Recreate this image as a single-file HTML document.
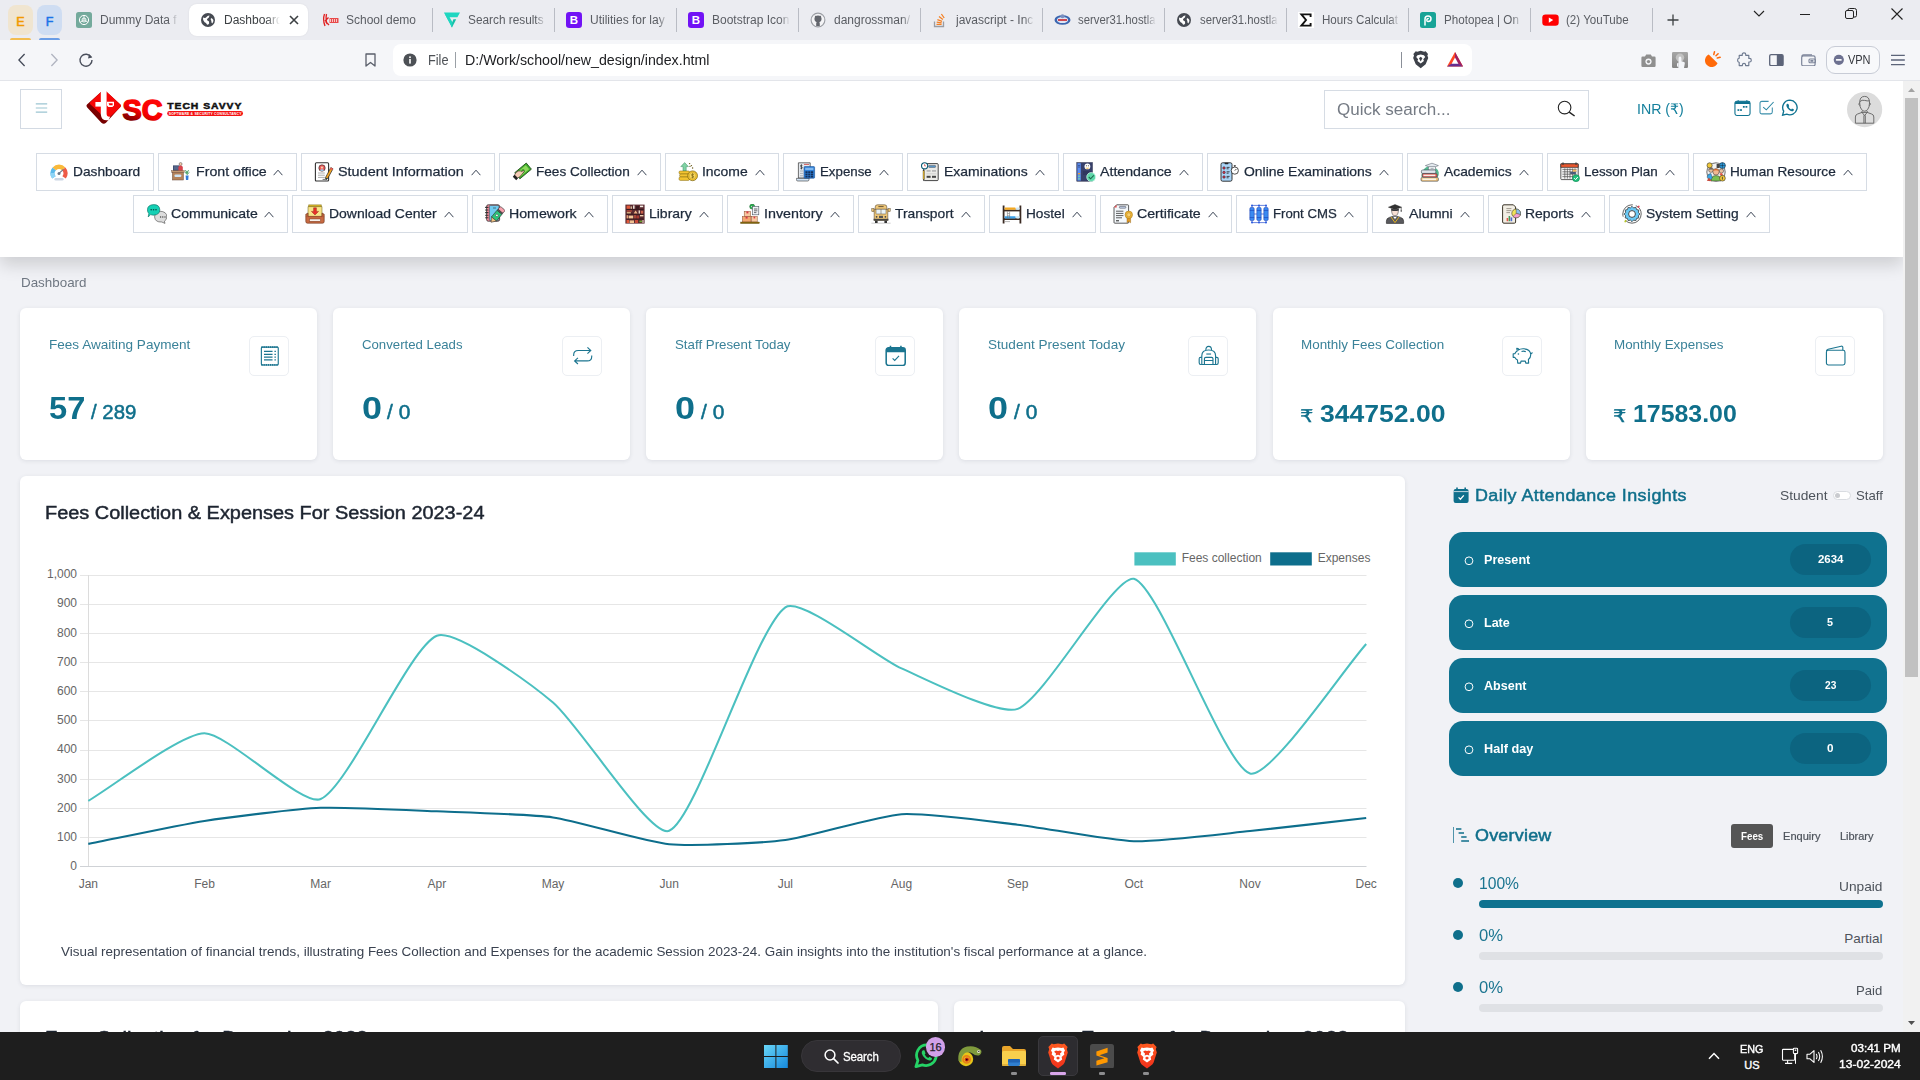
<!DOCTYPE html>
<html lang="en"><head><meta charset="utf-8"><title>Dashboard</title>
<style>
html,body{margin:0;padding:0;}
body{width:1920px;height:1080px;overflow:hidden;position:relative;background:#f1f2f6;font-family:"Liberation Sans",sans-serif;}
.t{position:absolute;white-space:nowrap;line-height:1;display:block;}
.b{position:absolute;display:block;}
#page{position:absolute;left:0;top:81px;width:1920px;height:951px;overflow:hidden;}
#page>.in{position:absolute;left:0;top:-81px;width:1920px;height:1080px;}
</style></head><body>
<div id="page"><div class="in">
<span class="t" style="left:20.75px;top:276px;font-size:13px;color:#6f7782;transform:scaleX(1.0299);transform-origin:0 50%;">Dashboard</span>
<div class="b" style="left:20px;top:308px;width:297px;height:152px;background:#fff;border-radius:6px;box-shadow:0 1px 4px rgba(40,50,70,.10);"></div>
<span class="t" style="left:48.75px;top:338px;font-size:13px;color:#3a8299;transform:scaleX(1.0419);transform-origin:0 50%;">Fees Awaiting Payment</span>
<div class="b" style="left:249px;top:336px;width:40px;height:40px;border:1px solid #eceff3;border-radius:5px;box-sizing:border-box;background:#fff;"></div>
<svg class="b" style="left:258.8px;top:344.8px;" width="21.4" height="21.4" viewBox="0 0 18 18"><rect x="2" y="1.8" width="14.2" height="15" rx="0.8" stroke="#1b7590" stroke-width="0.95" fill="none"/><path d="M4.2 5.4H11.4M4.2 7.8H11.4M4.2 10.2H11.4M4.2 12.6H11.4M13 5.4H14.2M13 7.8H14.2M13 10.2H14.2M13 12.6H14.2" stroke="#1b7590" stroke-width="1.05"/><path d="M2 1.8H16.2M2 16.8H16.2" stroke="#1b7590" stroke-width="1.5" stroke-dasharray="1.1 0.7"/></svg>
<div class="b" style="left:333.17px;top:308px;width:297px;height:152px;background:#fff;border-radius:6px;box-shadow:0 1px 4px rgba(40,50,70,.10);"></div>
<span class="t" style="left:361.92px;top:338px;font-size:13px;color:#3a8299;transform:scaleX(1.0150);transform-origin:0 50%;">Converted Leads</span>
<div class="b" style="left:562px;top:336px;width:40px;height:40px;border:1px solid #eceff3;border-radius:5px;box-sizing:border-box;background:#fff;"></div>
<svg class="b" style="left:571.8px;top:344.8px;" width="21.4" height="21.4" viewBox="0 0 18 18"><path d="M1.4 9.2V8.4Q1.4 4.6 5.2 4.6H15.6M13 2L15.8 4.6L13 7.2" stroke="#1b7590" stroke-width="0.95" fill="none"/><path d="M16.6 8.8V9.6Q16.6 13.4 12.8 13.4H2.4M5 10.8L2.2 13.4L5 16" stroke="#1b7590" stroke-width="0.95" fill="none"/></svg>
<div class="b" style="left:646.33px;top:308px;width:297px;height:152px;background:#fff;border-radius:6px;box-shadow:0 1px 4px rgba(40,50,70,.10);"></div>
<span class="t" style="left:675.08px;top:338px;font-size:13px;color:#3a8299;transform:scaleX(1.0223);transform-origin:0 50%;">Staff Present Today</span>
<div class="b" style="left:875px;top:336px;width:40px;height:40px;border:1px solid #eceff3;border-radius:5px;box-sizing:border-box;background:#fff;"></div>
<svg class="b" style="left:884.8px;top:344.8px;" width="21.4" height="21.4" viewBox="0 0 18 18"><rect x="1" y="2.4" width="16" height="14.8" rx="2" stroke="#1b7590" stroke-width="1.3" fill="none"/><path d="M1 4.4Q1 2.4 3 2.4H15Q17 2.4 17 4.4V6H1Z" fill="#1b7590"/><path d="M4.6 0.6V2.6M13.4 0.6V2.6" stroke="#1b7590" stroke-width="1.3"/><path d="M6.4 11.2L8.2 13L11.8 9.2" stroke="#1b7590" stroke-width="0.95" fill="none"/></svg>
<div class="b" style="left:959.3px;top:308px;width:297px;height:152px;background:#fff;border-radius:6px;box-shadow:0 1px 4px rgba(40,50,70,.10);"></div>
<span class="t" style="left:988.05px;top:338px;font-size:13px;color:#3a8299;transform:scaleX(1.0434);transform-origin:0 50%;">Student Present Today</span>
<div class="b" style="left:1188px;top:336px;width:40px;height:40px;border:1px solid #eceff3;border-radius:5px;box-sizing:border-box;background:#fff;"></div>
<svg class="b" style="left:1197.8px;top:344.8px;" width="21.4" height="21.4" viewBox="0 0 18 18"><path d="M3.2 16.4V9Q3.2 4.2 9 4.2Q14.8 4.2 14.8 9V16.4Z" stroke="#1b7590" stroke-width="0.95" fill="none"/><path d="M6.6 4.4Q6.6 1.2 9 1.2Q11.4 1.2 11.4 4.4" stroke="#1b7590" stroke-width="0.95" fill="none"/><path d="M5.4 16.4V11.6Q5.4 10.4 6.6 10.4H11.4Q12.6 10.4 12.6 11.6V16.4M5.4 13H12.6" stroke="#1b7590" stroke-width="0.95" fill="none"/><path d="M7 7.6H11" stroke="#1b7590" stroke-width="0.95" fill="none"/><path d="M3.2 10.4H2.2Q1 10.4 1 11.6V15Q1 16.4 2.2 16.4H3.2M14.8 10.4H15.8Q17 10.4 17 11.6V15Q17 16.4 15.8 16.4H14.8" stroke="#1b7590" stroke-width="0.95" fill="none"/></svg>
<div class="b" style="left:1272.67px;top:308px;width:297px;height:152px;background:#fff;border-radius:6px;box-shadow:0 1px 4px rgba(40,50,70,.10);"></div>
<span class="t" style="left:1301.42px;top:338px;font-size:13px;color:#3a8299;transform:scaleX(1.0329);transform-origin:0 50%;">Monthly Fees Collection</span>
<div class="b" style="left:1502px;top:336px;width:40px;height:40px;border:1px solid #eceff3;border-radius:5px;box-sizing:border-box;background:#fff;"></div>
<svg class="b" style="left:1511.8px;top:344.8px;" width="21.4" height="21.4" viewBox="0 0 18 18"><path d="M5 4.4Q7 3 10 3.2Q15.4 3.6 15.8 8Q15.8 10.6 13.8 12.2L14 15.2H11.6L11.2 13.6H7.6L7.2 15.2H4.8L4.6 12.6Q3 11.8 2.4 10.4H1V7.4H2.4Q3 5.8 4.4 5L4 2.8Q5.2 2.8 6 3.8" stroke="#1b7590" stroke-width="0.95" fill="none" stroke-linejoin="round"/><path d="M8 5.4Q10 4.8 11.6 5.6" stroke="#1b7590" stroke-width="0.95" fill="none"/><circle cx="5.4" cy="7.6" r="0.7" fill="#1b7590"/><path d="M15.8 7.4Q17 7.2 17 6" stroke="#1b7590" stroke-width="0.95" fill="none"/></svg>
<div class="b" style="left:1585.83px;top:308px;width:297px;height:152px;background:#fff;border-radius:6px;box-shadow:0 1px 4px rgba(40,50,70,.10);"></div>
<span class="t" style="left:1614.23px;top:338px;font-size:13px;color:#3a8299;transform:scaleX(1.0308);transform-origin:0 50%;">Monthly Expenses</span>
<div class="b" style="left:1815px;top:336px;width:40px;height:40px;border:1px solid #eceff3;border-radius:5px;box-sizing:border-box;background:#fff;"></div>
<svg class="b" style="left:1824.8px;top:344.8px;" width="21.4" height="21.4" viewBox="0 0 18 18"><path d="M1.2 5.2Q1.2 4 2.6 3.6L13.6 1Q15 0.8 15 2.2V4.4" stroke="#1b7590" stroke-width="0.95" fill="none"/><rect x="1.2" y="4.4" width="15.6" height="12.4" rx="1.6" stroke="#1b7590" stroke-width="0.95" fill="none"/></svg>
<span class="t" style="left:48.75px;top:392px;font-size:32px;color:#0f6f8b;transform:scaleX(1.0198);transform-origin:0 50%;font-weight:700;">57</span>
<span class="t" style="left:90.50px;top:402px;font-size:20px;color:#0f6f8b;transform:scaleX(1.0184);transform-origin:0 50%;-webkit-text-stroke:0.5px #0f6f8b;">/ 289</span>
<span class="t" style="left:361.97px;top:392px;font-size:32px;color:#0f6f8b;transform:scaleX(1.1238);transform-origin:0 50%;font-weight:700;">0</span>
<span class="t" style="left:387.47px;top:402px;font-size:20px;color:#0f6f8b;transform:scaleX(1.0479);transform-origin:0 50%;-webkit-text-stroke:0.5px #0f6f8b;">/ 0</span>
<span class="t" style="left:675.13px;top:392px;font-size:32px;color:#0f6f8b;transform:scaleX(1.1238);transform-origin:0 50%;font-weight:700;">0</span>
<span class="t" style="left:700.63px;top:402px;font-size:20px;color:#0f6f8b;transform:scaleX(1.0479);transform-origin:0 50%;-webkit-text-stroke:0.5px #0f6f8b;">/ 0</span>
<span class="t" style="left:988.10px;top:392px;font-size:32px;color:#0f6f8b;transform:scaleX(1.1238);transform-origin:0 50%;font-weight:700;">0</span>
<span class="t" style="left:1013.60px;top:402px;font-size:20px;color:#0f6f8b;transform:scaleX(1.0479);transform-origin:0 50%;-webkit-text-stroke:0.5px #0f6f8b;">/ 0</span>
<span class="t" style="left:1300.35px;top:408px;font-size:17.5px;font-family:'DejaVu Sans','Liberation Sans',sans-serif;color:#0f6f8b;-webkit-text-stroke:0.35px #0f6f8b;transform:scaleX(1.2);transform-origin:left;">₹</span>
<span class="t" style="left:1320.00px;top:402px;font-size:24px;color:#0f6f8b;transform:scaleX(1.1062);transform-origin:0 50%;font-weight:700;">344752.00</span>
<span class="t" style="left:1613.35px;top:408px;font-size:17.5px;font-family:'DejaVu Sans','Liberation Sans',sans-serif;color:#0f6f8b;-webkit-text-stroke:0.35px #0f6f8b;transform:scaleX(1.2);transform-origin:left;">₹</span>
<span class="t" style="left:1633.25px;top:402px;font-size:24px;color:#0f6f8b;transform:scaleX(1.0369);transform-origin:0 50%;font-weight:700;">17583.00</span>
<div class="b" style="left:20px;top:476px;width:1385px;height:509px;background:#fff;border-radius:6px;box-shadow:0 1px 4px rgba(40,50,70,.10);"></div>
<span class="t" style="left:44.50px;top:504px;font-size:18px;color:#1d2430;transform:scaleX(1.1064);transform-origin:0 50%;-webkit-text-stroke:0.45px #1d2430;">Fees Collection &amp; Expenses For Session 2023-24</span>
<svg class="b" style="left:0;top:0" width="1420" height="1000" viewBox="0 0 1420 1000"><path d="M80 866.5H1366.5" stroke="#cfd2d6" stroke-width="1"/><path d="M80 837.5H1366.5" stroke="#e6e6e6" stroke-width="1"/><path d="M80 808.5H1366.5" stroke="#e6e6e6" stroke-width="1"/><path d="M80 779.5H1366.5" stroke="#e6e6e6" stroke-width="1"/><path d="M80 750.5H1366.5" stroke="#e6e6e6" stroke-width="1"/><path d="M80 720.5H1366.5" stroke="#e6e6e6" stroke-width="1"/><path d="M80 691.5H1366.5" stroke="#e6e6e6" stroke-width="1"/><path d="M80 662.5H1366.5" stroke="#e6e6e6" stroke-width="1"/><path d="M80 633.5H1366.5" stroke="#e6e6e6" stroke-width="1"/><path d="M80 604.5H1366.5" stroke="#e6e6e6" stroke-width="1"/><path d="M80 575.5H1366.5" stroke="#e6e6e6" stroke-width="1"/><path d="M88.5 575V866" stroke="#dcdcdc" stroke-width="1"/><path d="M88.30 800.82C111.53 787.31 181.16 733.48 204.47 733.30C227.63 733.13 302.06 806.87 320.65 799.07C348.53 787.37 408.97 647.40 436.82 635.82C455.44 628.08 532.72 685.45 552.99 702.46C579.19 724.44 650.24 838.54 669.16 830.79C696.70 819.51 754.79 628.65 785.34 607.30C801.26 596.17 877.52 657.93 901.51 668.41C923.99 678.24 998.46 716.27 1017.68 708.86C1044.93 698.35 1113.65 575.00 1133.85 578.78C1160.12 586.09 1223.73 766.09 1250.03 773.46C1270.20 779.12 1342.97 669.87 1366.20 643.97" stroke="#4bc0c0" stroke-width="2.05" fill="none"/><path d="M88.30 843.88C111.53 839.29 181.09 824.53 204.47 820.89C227.56 817.31 297.34 808.76 320.65 807.80C343.81 806.84 413.59 810.33 436.82 811.29C460.06 812.25 530.04 814.15 552.99 817.40C576.51 820.73 645.64 841.88 669.16 844.17C692.10 846.42 762.38 843.06 785.34 840.10C808.85 837.07 878.04 815.76 901.51 814.20C924.51 812.68 994.52 821.98 1017.68 824.68C1040.99 827.39 1110.55 840.62 1133.85 841.26C1157.02 841.90 1226.82 833.41 1250.03 831.08C1273.29 828.75 1342.97 820.60 1366.20 817.99" stroke="#0d6e8c" stroke-width="2.05" fill="none"/><rect x="1134.4" y="552.3" width="41.4" height="13.2" fill="#4bc0c0"/><rect x="1270.2" y="552.3" width="41.6" height="13.2" fill="#0d6e8c"/></svg>
<span class="t" style="left:70.33px;top:860px;font-size:12px;color:#666;">0</span>
<span class="t" style="left:56.98px;top:831px;font-size:12px;color:#666;">100</span>
<span class="t" style="left:56.98px;top:802px;font-size:12px;color:#666;">200</span>
<span class="t" style="left:56.98px;top:773px;font-size:12px;color:#666;">300</span>
<span class="t" style="left:56.98px;top:743px;font-size:12px;color:#666;">400</span>
<span class="t" style="left:56.98px;top:714px;font-size:12px;color:#666;">500</span>
<span class="t" style="left:56.98px;top:685px;font-size:12px;color:#666;">600</span>
<span class="t" style="left:56.98px;top:656px;font-size:12px;color:#666;">700</span>
<span class="t" style="left:56.98px;top:627px;font-size:12px;color:#666;">800</span>
<span class="t" style="left:56.98px;top:597px;font-size:12px;color:#666;">900</span>
<span class="t" style="left:46.97px;top:568px;font-size:12px;color:#666;">1,000</span>
<span class="t" style="left:78.63px;top:878px;font-size:12px;color:#666;">Jan</span>
<span class="t" style="left:194.13px;top:878px;font-size:12px;color:#666;">Feb</span>
<span class="t" style="left:310.31px;top:878px;font-size:12px;color:#666;">Mar</span>
<span class="t" style="left:427.48px;top:878px;font-size:12px;color:#666;">Apr</span>
<span class="t" style="left:541.66px;top:878px;font-size:12px;color:#666;">May</span>
<span class="t" style="left:659.49px;top:878px;font-size:12px;color:#666;">Jun</span>
<span class="t" style="left:777.67px;top:878px;font-size:12px;color:#666;">Jul</span>
<span class="t" style="left:890.83px;top:878px;font-size:12px;color:#666;">Aug</span>
<span class="t" style="left:1007.01px;top:878px;font-size:12px;color:#666;">Sep</span>
<span class="t" style="left:1124.52px;top:878px;font-size:12px;color:#666;">Oct</span>
<span class="t" style="left:1239.36px;top:878px;font-size:12px;color:#666;">Nov</span>
<span class="t" style="left:1355.53px;top:878px;font-size:12px;color:#666;">Dec</span>
<span class="t" style="left:1181.70px;top:552px;font-size:12px;color:#666;">Fees collection</span>
<span class="t" style="left:1317.70px;top:552px;font-size:12px;color:#666;">Expenses</span>
<span class="t" style="left:60.50px;top:945px;font-size:13px;color:#3a4250;transform:scaleX(1.0342);transform-origin:0 50%;">Visual representation of financial trends, illustrating Fees Collection and Expenses for the academic Session 2023-24. Gain insights into the institution&#x27;s fiscal performance at a glance.</span>
<div class="b" style="left:20px;top:1001px;width:918px;height:60px;background:#fff;border-radius:6px;box-shadow:0 1px 4px rgba(40,50,70,.10);"></div>
<div class="b" style="left:954px;top:1001px;width:451px;height:60px;background:#fff;border-radius:6px;box-shadow:0 1px 4px rgba(40,50,70,.10);"></div>
<span class="t" style="left:44.50px;top:1029px;font-size:18px;color:#1d2430;letter-spacing:0.159px;transform:scaleX(1.1200);transform-origin:0 50%;-webkit-text-stroke:0.45px #1d2430;">Fees Collection for December 2023</span>
<span class="t" style="left:978.50px;top:1029px;font-size:18px;color:#1d2430;letter-spacing:0.405px;transform:scaleX(1.1200);transform-origin:0 50%;-webkit-text-stroke:0.45px #1d2430;">Income vs Expense for December 2023</span>
<svg class="b" style="left:1453px;top:487px;" width="17" height="17" viewBox="0 0 17 17"><path d="M0.6 4Q0.6 2 2.6 2H13.6Q15.6 2 15.6 4V14Q15.6 16 13.6 16H2.6Q0.6 16 0.6 14Z" fill="#0f6f8b"/><path d="M4 0.4V3M12.2 0.4V3" stroke="#0f6f8b" stroke-width="1.6"/><path d="M0.6 4.6H15.6" stroke="#f1f2f6" stroke-width="0.8"/><path d="M5.6 10.4L7.4 12.2L10.8 8.4" stroke="#fff" stroke-width="1.3" fill="none"/></svg>
<span class="t" style="left:1474.50px;top:488px;font-size:16px;color:#0f6f8b;letter-spacing:0.385px;transform:scaleX(1.1200);transform-origin:0 50%;-webkit-text-stroke:0.45px #0f6f8b;">Daily Attendance Insights</span>
<span class="t" style="left:1779.50px;top:489px;font-size:13px;color:#4d535b;transform:scaleX(1.0599);transform-origin:0 50%;">Student</span>
<div class="b" style="left:1832.5px;top:490.5px;width:18px;height:9.5px;border:1px solid #d9dce1;border-radius:5px;box-sizing:border-box;background:#fff;"></div>
<div class="b" style="left:1834.7px;top:492.6px;width:5.4px;height:5.4px;border-radius:50%;background:#c9cbcf;"></div>
<span class="t" style="left:1855.75px;top:489px;font-size:13px;color:#4d535b;transform:scaleX(1.0113);transform-origin:0 50%;">Staff</span>
<div class="b" style="left:1449px;top:532px;width:438px;height:54.75px;background:#0f728f;border-radius:14px;"></div>
<div class="b" style="left:1790px;top:544px;width:81.25px;height:31px;background:#0c6480;border-radius:15.5px;"></div>
<svg class="b" style="left:1463px;top:555px;" width="12" height="12" viewBox="0 0 12 12"><circle cx="6" cy="5.8" r="3.9" stroke="#fff" stroke-width="1" fill="none"/></svg>
<span class="t" style="left:1483.75px;top:553px;font-size:13px;color:#fff;transform:scaleX(0.9708);transform-origin:0 50%;font-weight:700;">Present</span>
<span class="t" style="left:1817.65px;top:554px;font-size:10.5px;color:#fff;transform:scaleX(1.0916);transform-origin:0 50%;font-weight:700;">2634</span>
<div class="b" style="left:1449px;top:595px;width:438px;height:54.75px;background:#0f728f;border-radius:14px;"></div>
<div class="b" style="left:1790px;top:607px;width:81.25px;height:31px;background:#0c6480;border-radius:15.5px;"></div>
<svg class="b" style="left:1463px;top:618px;" width="12" height="12" viewBox="0 0 12 12"><circle cx="6" cy="5.8" r="3.9" stroke="#fff" stroke-width="1" fill="none"/></svg>
<span class="t" style="left:1483.75px;top:616px;font-size:13px;color:#fff;transform:scaleX(0.9633);transform-origin:0 50%;font-weight:700;">Late</span>
<span class="t" style="left:1827.40px;top:617px;font-size:10.5px;color:#fff;transform:scaleX(1.0274);transform-origin:0 50%;font-weight:700;">5</span>
<div class="b" style="left:1449px;top:658px;width:438px;height:54.75px;background:#0f728f;border-radius:14px;"></div>
<div class="b" style="left:1790px;top:670px;width:81.25px;height:31px;background:#0c6480;border-radius:15.5px;"></div>
<svg class="b" style="left:1463px;top:681px;" width="12" height="12" viewBox="0 0 12 12"><circle cx="6" cy="5.8" r="3.9" stroke="#fff" stroke-width="1" fill="none"/></svg>
<span class="t" style="left:1483.75px;top:679px;font-size:13px;color:#fff;transform:scaleX(0.9646);transform-origin:0 50%;font-weight:700;">Absent</span>
<span class="t" style="left:1824.75px;top:680px;font-size:10.5px;color:#fff;transform:scaleX(0.9675);transform-origin:0 50%;font-weight:700;">23</span>
<div class="b" style="left:1449px;top:721px;width:438px;height:54.75px;background:#0f728f;border-radius:14px;"></div>
<div class="b" style="left:1790px;top:733px;width:81.25px;height:31px;background:#0c6480;border-radius:15.5px;"></div>
<svg class="b" style="left:1463px;top:744px;" width="12" height="12" viewBox="0 0 12 12"><circle cx="6" cy="5.8" r="3.9" stroke="#fff" stroke-width="1" fill="none"/></svg>
<span class="t" style="left:1483.75px;top:742px;font-size:13px;color:#fff;transform:scaleX(0.9738);transform-origin:0 50%;font-weight:700;">Half day</span>
<span class="t" style="left:1827.15px;top:743px;font-size:10.5px;color:#fff;transform:scaleX(1.1131);transform-origin:0 50%;font-weight:700;">0</span>
<svg class="b" style="left:1453px;top:827px;" width="17" height="17" viewBox="0 0 17 17"><path d="M0.4 0V16" stroke="#0f6f8b" stroke-width="0.8"/><path d="M3 2H8.4M5.6 6H11M8.2 10H13.6M8.2 14H16" stroke="#0f6f8b" stroke-width="1.7"/></svg>
<span class="t" style="left:1474.50px;top:828px;font-size:16px;color:#0f6f8b;letter-spacing:0.203px;transform:scaleX(1.1200);transform-origin:0 50%;-webkit-text-stroke:0.5px #0f6f8b;">Overview</span>
<div class="b" style="left:1731px;top:824px;width:42px;height:23.75px;background:#555;border-radius:3px;"></div>
<span class="t" style="left:1740.75px;top:831px;font-size:10.5px;color:#fff;transform:scaleX(0.9318);transform-origin:0 50%;font-weight:700;">Fees</span>
<span class="t" style="left:1782.50px;top:831px;font-size:10.5px;color:#4d535b;transform:scaleX(1.0533);transform-origin:0 50%;-webkit-text-stroke:0.2px #4d535b;">Enquiry</span>
<span class="t" style="left:1839.50px;top:831px;font-size:10.5px;color:#4d535b;transform:scaleX(1.0437);transform-origin:0 50%;-webkit-text-stroke:0.2px #4d535b;">Library</span>
<div class="b" style="left:1453px;top:878px;width:10px;height:10px;border-radius:50%;background:#0f6f8b;"></div>
<span class="t" style="left:1479.25px;top:876px;font-size:16px;color:#1b7590;transform:scaleX(0.9775);transform-origin:0 50%;">100%</span>
<span class="t" style="left:1839.00px;top:880px;font-size:13.5px;color:#4d535b;transform:scaleX(1.0168);transform-origin:0 50%;">Unpaid</span>
<div class="b" style="left:1479px;top:900px;width:404px;height:8px;border-radius:4px;background:#0f728f;"></div>
<div class="b" style="left:1453px;top:930px;width:10px;height:10px;border-radius:50%;background:#0f6f8b;"></div>
<span class="t" style="left:1479.25px;top:928px;font-size:16px;color:#1b7590;transform:scaleX(1.0378);transform-origin:0 50%;">0%</span>
<span class="t" style="left:1844.25px;top:932px;font-size:13.5px;color:#4d535b;">Partial</span>
<div class="b" style="left:1479px;top:952px;width:404px;height:8px;border-radius:4px;background:#dfe1e5;"></div>
<div class="b" style="left:1453px;top:982px;width:10px;height:10px;border-radius:50%;background:#0f6f8b;"></div>
<span class="t" style="left:1479.25px;top:980px;font-size:16px;color:#1b7590;transform:scaleX(1.0378);transform-origin:0 50%;">0%</span>
<span class="t" style="left:1856.25px;top:984px;font-size:13.5px;color:#4d535b;transform:scaleX(0.9715);transform-origin:0 50%;">Paid</span>
<div class="b" style="left:1479px;top:1004px;width:404px;height:8px;border-radius:4px;background:#dfe1e5;"></div>
<div class="b" style="left:0px;top:81px;width:1903px;height:176px;background:#fff;box-shadow:0 8px 16px rgba(0,0,0,.15);"></div>
<div class="b" style="left:20px;top:89px;width:42px;height:39.5px;border:1px solid #d3dae3;box-sizing:border-box;background:#fff;"></div>
<svg class="b" style="left:35px;top:102px;" width="13" height="12" viewBox="0 0 13 12"><path d="M0.8 1.8H12.2M0.8 6H12.2M0.8 10.2H12.2" stroke="#9cc5d2" stroke-width="1.2"/></svg>
<svg class="b" style="left:80px;top:84px;" width="170" height="50" viewBox="0 0 170 50"><defs><linearGradient id="lg2" x1="0.75" y1="0.1" x2="0.25" y2="0.95"><stop offset="0" stop-color="#ff0808"/><stop offset="0.55" stop-color="#f80000"/><stop offset="0.8" stop-color="#a80000"/><stop offset="1" stop-color="#6e0000"/></linearGradient>
<linearGradient id="lg3" x1="0.8" y1="0.2" x2="0.2" y2="0.9"><stop offset="0" stop-color="#b00000"/><stop offset="1" stop-color="#6a0000"/></linearGradient></defs>
<path d="M22.6 6.6Q23.9 5.4 25.2 6.6L40.4 20.6Q41.6 21.8 40.4 23L26 38.8Q23.8 40.8 21.4 38.8L7 23.2Q5.8 21.8 7 20.6Z" fill="url(#lg3)"/>
<path d="M22.6 6.6Q23.9 5.4 25.2 6.6L40.4 20.6Q41.6 21.8 40.4 23L29.4 33.6Q27 35.6 24.6 33.6L10 20Q9.4 19 10.4 18Z" fill="#f60606"/>
<path d="M20.8 5.4H26.6V29.4Q26.6 33.2 30.2 32.6L28.6 36.2Q21.4 37.4 20.8 30.2Z" fill="#fff"/>
<path d="M15.4 18H21.4V22.6H15.4Z" fill="#fff"/>
<path d="M27 17.8H34V21.4L32.4 23H28.4L27 21.4Z" fill="#fff"/>
<path d="M28.6 19.2H32.6V21.2H29.4Z" fill="#f60606"/>
<text x="42.6" y="35.6" font-family="Liberation Sans, sans-serif" font-weight="700" font-size="28.6" fill="url(#lg2)" stroke="url(#lg2)" stroke-width="1.5" stroke-linejoin="round" textLength="40" lengthAdjust="spacingAndGlyphs">SC</text>
<text x="87.2" y="24.9" font-family="Liberation Sans, sans-serif" font-weight="700" font-size="9.6" letter-spacing="0.9" fill="#111" stroke="#111" stroke-width="0.5" textLength="75.2" lengthAdjust="spacingAndGlyphs">TECH SAVVY</text>
<rect x="87.2" y="27" width="75.8" height="4.9" rx="2.45" fill="#f41212"/>
<text x="88.8" y="30.7" font-family="Liberation Sans, sans-serif" font-weight="700" font-size="3.4" fill="#fff" textLength="72.6" lengthAdjust="spacing">SOFTWARE &amp; SECURITY CONSULTANCY</text></svg>
<div class="b" style="left:1324px;top:89.5px;width:264.5px;height:39px;border:1px solid #d6dce4;box-sizing:border-box;background:#fff;"></div>
<span class="t" style="left:1336.50px;top:102px;font-size:16px;color:#757b84;transform:scaleX(1.0637);transform-origin:0 50%;">Quick search...</span>
<svg class="b" style="left:1557px;top:100px;" width="19" height="17" viewBox="0 0 19 17"><circle cx="7.6" cy="7.6" r="6.3" stroke="#222" stroke-width="1.1" fill="none"/><path d="M12.2 12.2L17.6 16" stroke="#222" stroke-width="1.5"/></svg>
<span class="t" style="left:1636.80px;top:102px;font-size:14.5px;color:#15809d;transform:scaleX(0.9771);transform-origin:0 50%;font-family:'Liberation Sans','DejaVu Sans',sans-serif;">INR (₹)</span>
<svg class="b" style="left:1733.9px;top:100px;" width="17" height="16.5" viewBox="0 0 17 16.5"><rect x="0.95" y="1.3" width="15.1" height="14.2" rx="1.9" stroke="#0f7391" stroke-width="1.1" fill="none"/><path d="M0.95 3.2Q0.95 1.3 2.85 1.3H14.15Q16.05 1.3 16.05 3.2V3.9H0.95Z" fill="#0f7391"/><path d="M4.2 0.3V1.6M12.8 0.3V1.6" stroke="#0f7391" stroke-width="1.2"/><rect x="8.9" y="6" width="1.8" height="1.7" fill="#0f7391"/><rect x="11.5" y="6" width="1.8" height="1.7" fill="#0f7391"/><rect x="3.5" y="9.2" width="1.8" height="1.7" fill="#0f7391"/><rect x="6.1" y="9.2" width="1.8" height="1.7" fill="#0f7391"/></svg>
<svg class="b" style="left:1758.9px;top:100.4px;" width="16" height="15.4" viewBox="0 0 16 15.4"><path d="M13.3 7.4V12Q13.3 13.9 11.4 13.9H2.9Q1 13.9 1 12V3.3Q1 1.4 2.9 1.4H9.6" stroke="#3b8fab" stroke-width="1.05" fill="none"/><path d="M4.2 7.2L7.3 9.9L14.6 2" stroke="#2a86a3" stroke-width="1.05" fill="none"/></svg>
<svg class="b" style="left:1781px;top:99.4px;" width="18" height="17" viewBox="0 0 18 17"><path d="M9 1.2A7.3 7.3 0 0 0 2.7 12.2L1.6 16.2L5.7 15.1A7.3 7.3 0 1 0 9 1.2Z" stroke="#0f7391" stroke-width="1.35" fill="none"/><path d="M6.2 4.8Q5.2 5.4 5.4 7Q6 9.4 8.2 11Q10.4 12.6 11.8 12.2Q13 11.8 13 10.6L11 9.6L10.2 10.4Q8.6 9.8 7.6 8L8.2 7.2L7.4 5Z" fill="#0f7391"/></svg>
<svg class="b" style="left:1846.7px;top:91.8px;" width="36" height="36" viewBox="0 0 36 36"><circle cx="17.6" cy="17.6" r="17.6" fill="#dcdcdc"/><path d="M8.4 31.2V25Q8.4 22.6 10.6 22L15 20.4H20.2L24.6 22Q26.8 22.6 26.8 25V31.2Z" stroke="#5a5a5a" stroke-width="0.85" fill="none"/><path d="M12.7 11Q12.5 4.4 17.6 4.4Q22.7 4.4 22.5 11Q22.5 15.4 20.6 17.6Q19 19.2 17.6 19.2Q16.2 19.2 14.6 17.6Q12.7 15.4 12.7 11Z" stroke="#5a5a5a" stroke-width="0.85" fill="none"/><path d="M12.8 9.6Q15 7.6 17.6 8.4Q20.4 9.2 22.4 8.8" stroke="#5a5a5a" stroke-width="0.85" fill="none"/><path d="M12.7 10.8Q11.6 11 12 12.6L12.8 13.6M22.5 10.8Q23.6 11 23.2 12.6L22.4 13.6" stroke="#5a5a5a" stroke-width="0.85" fill="none"/><path d="M15 20.4L17.6 23.6L20.2 20.4M16.9 23.4V31.2M18.3 23.4V31.2M15 19V20.4M20.2 19V20.4" stroke="#5a5a5a" stroke-width="0.85" fill="none"/></svg>
<div class="b" style="left:36px;top:153px;width:117.80000000000001px;height:37.5px;border:1px solid #d6dce4;box-sizing:border-box;background:#fff;"></div>
<svg class="b" style="left:49.2px;top:161.5px;" width="20" height="20" viewBox="0 0 20 20"><path d="M3.2 16.6A8.6 8.6 0 0 1 3.6 5.4L7 8.2A4.6 4.6 0 0 0 6.6 14.2Z" fill="#5bb9ea"/><path d="M3.2 16.6A8.6 8.6 0 0 1 1.4 11L5.4 11A4.6 4.6 0 0 0 6.6 14.2Z" fill="#8ed4f6"/>
<path d="M3.6 5.4A8.6 8.6 0 0 1 16.4 5.4L13 8.2A4.6 4.6 0 0 0 7 8.2Z" fill="#f9b93a"/><path d="M16.4 5.4A8.6 8.6 0 0 1 16.8 16.6L13.4 14.2A4.6 4.6 0 0 0 13 8.2Z" fill="#ee5a46"/>
<circle cx="10" cy="11.4" r="1.5" fill="#6b7686"/><path d="M10 11.4L14.4 7.4" stroke="#6b7686" stroke-width="1.1"/><rect x="5.4" y="16" width="9.2" height="2.6" rx="1.3" fill="#cbd6e4"/></svg>
<span class="t" style="left:73.40px;top:165px;font-size:13px;color:#1e2a3b;transform:scaleX(1.0550);transform-origin:0 50%;-webkit-text-stroke:0.25px #1e2a3b;">Dashboard</span>
<div class="b" style="left:158.2px;top:153px;width:138.5px;height:37.5px;border:1px solid #d6dce4;box-sizing:border-box;background:#fff;"></div>
<svg class="b" style="left:171.39999999999998px;top:161.5px;" width="20" height="20" viewBox="0 0 20 20"><rect x="2" y="3.4" width="6.6" height="5.6" fill="#3b4a6c"/><rect x="2.8" y="4.2" width="5" height="3.6" fill="#56668a"/>
<circle cx="9.6" cy="2" r="1.5" fill="#f0c9a8" stroke="#2b2b33" stroke-width="0.4"/><path d="M7.4 9V5.4Q7.4 3.6 9.6 3.6Q11.8 3.6 11.8 5.4V9Z" fill="#d8434b"/>
<rect x="0.6" y="8.6" width="12.6" height="1.6" fill="#c99b72" stroke="#6a4a3a" stroke-width="0.4"/><rect x="1.4" y="10.2" width="11" height="7.8" fill="#b5835a" stroke="#6a4a3a" stroke-width="0.5"/>
<rect x="3.4" y="12.6" width="7" height="2.4" rx="1.2" fill="#cfe3f3"/><path d="M16 12.4V8.8M16 12.4L13.8 10M16 12.4L18.4 10.4M16 11L14.4 8.2M16 11L17.6 8.2" stroke="#3c9a5a" stroke-width="0.9"/><path d="M14.6 13.4H17.6L17.2 18H15Z" fill="#2f7bd8"/></svg>
<span class="t" style="left:195.60px;top:165px;font-size:13px;color:#1e2a3b;transform:scaleX(1.0912);transform-origin:0 50%;-webkit-text-stroke:0.25px #1e2a3b;">Front office</span>
<svg class="b" style="left:272.7px;top:168.5px;" width="10" height="7" viewBox="0 0 10 7"><path d="M0.6 6.2L5 1.2L9.4 6.2" stroke="#3a4454" stroke-width="1" fill="none"/></svg>
<div class="b" style="left:301px;top:153px;width:193.5px;height:37.5px;border:1px solid #d6dce4;box-sizing:border-box;background:#fff;"></div>
<svg class="b" style="left:314.2px;top:161.5px;" width="20" height="20" viewBox="0 0 20 20"><path d="M2.4 0.8H13.6Q14.6 0.8 14.6 1.8V18Q14.6 19 13.6 19H2.4Q1.4 19 1.4 18V1.8Q1.4 0.8 2.4 0.8Z" fill="#fff" stroke="#333" stroke-width="1.1"/>
<circle cx="8" cy="6" r="3.2" fill="#ee5c5c" stroke="#222" stroke-width="0.6"/><circle cx="8" cy="5.6" r="1.1" fill="#f5d0b0"/><path d="M5.8 8.2Q8 6.4 10.2 8.2Q8 9.6 5.8 8.2Z" fill="#8fd0f5"/>
<path d="M4 11H10.8M4 13.2H10.8M4 15.4H10.8" stroke="#999" stroke-width="0.8"/><path d="M8.6 17.4H11" stroke="#333" stroke-width="0.7"/>
<path d="M16.8 5.6L19 6.8L13.6 16.6L11.8 17.8L11.6 15.4Z" fill="#f5a623" stroke="#222" stroke-width="0.7" stroke-linejoin="round"/><path d="M16.8 5.6L19 6.8L18.2 8.2L16 7Z" fill="#ee5c5c"/><path d="M11.6 15.4L13.6 16.6L11.8 17.8Z" fill="#1e3a4c"/></svg>
<span class="t" style="left:338.40px;top:165px;font-size:13px;color:#1e2a3b;transform:scaleX(1.1079);transform-origin:0 50%;-webkit-text-stroke:0.25px #1e2a3b;">Student Information</span>
<svg class="b" style="left:470.5px;top:168.5px;" width="10" height="7" viewBox="0 0 10 7"><path d="M0.6 6.2L5 1.2L9.4 6.2" stroke="#3a4454" stroke-width="1" fill="none"/></svg>
<div class="b" style="left:499px;top:153px;width:161.5px;height:37.5px;border:1px solid #d6dce4;box-sizing:border-box;background:#fff;"></div>
<svg class="b" style="left:512.2px;top:161.5px;" width="20" height="20" viewBox="0 0 20 20"><g transform="rotate(-40 11 9)"><rect x="3.6" y="5" width="15" height="8" fill="#3fae2a" stroke="#1f4a1a" stroke-width="0.8"/><rect x="5.4" y="6.4" width="11.4" height="5.2" fill="#8ed85c"/><circle cx="11" cy="9" r="1.8" fill="#3fae2a"/></g>
<path d="M2.4 13.4Q3.6 9.6 6.6 9Q8.4 8.6 9.8 9.6L11.4 8.4Q12.4 8.6 12 9.8L9.6 12.6Q8 15.4 5.4 16Z" fill="#f6cdb6" stroke="#3a2a24" stroke-width="0.6"/><path d="M0.8 14.8L2.6 12.8L6 16.2L4.2 18.2Z" fill="#222"/></svg>
<span class="t" style="left:536.40px;top:165px;font-size:13px;color:#1e2a3b;transform:scaleX(1.0458);transform-origin:0 50%;-webkit-text-stroke:0.25px #1e2a3b;">Fees Collection</span>
<svg class="b" style="left:636.5px;top:168.5px;" width="10" height="7" viewBox="0 0 10 7"><path d="M0.6 6.2L5 1.2L9.4 6.2" stroke="#3a4454" stroke-width="1" fill="none"/></svg>
<div class="b" style="left:665px;top:153px;width:113.5px;height:37.5px;border:1px solid #d6dce4;box-sizing:border-box;background:#fff;"></div>
<svg class="b" style="left:678.2px;top:161.5px;" width="20" height="20" viewBox="0 0 20 20"><path d="M5 9V4.6H2.8L6.6 0.6L10.4 4.6H8.2V9Z" fill="#7fd3a4" stroke="#3c8a62" stroke-width="0.5"/>
<circle cx="11.6" cy="1.6" r="0.7" fill="#6a5a1a"/><circle cx="13.4" cy="3.6" r="0.7" fill="#6a5a1a"/><circle cx="14.6" cy="6" r="0.7" fill="#6a5a1a"/><circle cx="12" cy="4.4" r="0.6" fill="#6a5a1a"/>
<rect x="1" y="9" width="10.6" height="3" rx="1.3" fill="#f3c431" stroke="#7a6412" stroke-width="0.5"/><rect x="1.6" y="12" width="10.6" height="3" rx="1.3" fill="#f3c431" stroke="#7a6412" stroke-width="0.5"/><rect x="1" y="15" width="10.6" height="3.4" rx="1.3" fill="#f3c431" stroke="#7a6412" stroke-width="0.5"/>
<circle cx="14.6" cy="13.8" r="4.9" fill="#f3c431" stroke="#7a6412" stroke-width="0.7"/><circle cx="14.6" cy="13.8" r="3.3" fill="#f8d860" stroke="#b8961c" stroke-width="0.4"/><path d="M15.8 12.6Q14.6 11.8 13.6 12.6Q13.2 13.6 14.6 13.8Q16 14.2 15.6 15.2Q14.6 16 13.4 15.2M14.6 11.2V16.4" stroke="#7a6412" stroke-width="0.7" fill="none"/></svg>
<span class="t" style="left:702.40px;top:165px;font-size:13px;color:#1e2a3b;transform:scaleX(1.0720);transform-origin:0 50%;-webkit-text-stroke:0.25px #1e2a3b;">Income</span>
<svg class="b" style="left:754.5px;top:168.5px;" width="10" height="7" viewBox="0 0 10 7"><path d="M0.6 6.2L5 1.2L9.4 6.2" stroke="#3a4454" stroke-width="1" fill="none"/></svg>
<div class="b" style="left:783px;top:153px;width:119.5px;height:37.5px;border:1px solid #d6dce4;box-sizing:border-box;background:#fff;"></div>
<svg class="b" style="left:796.2px;top:161.5px;" width="20" height="20" viewBox="0 0 20 20"><path d="M2.4 0.8H14.2V16H2.4Z" fill="#e5e9ee" stroke="#333" stroke-width="0.7"/><path d="M0.4 16.4H13V17.6Q13 19 11.6 19H1.8Q0.4 19 0.4 17.6Z" fill="#d2e4f5" stroke="#333" stroke-width="0.6"/>
<path d="M8 2.4H13" stroke="#d04a4a" stroke-width="0.9"/><path d="M4 9H7M4 11.4H7M4 13.8H7" stroke="#9aa3ad" stroke-width="0.8"/>
<path d="M6.4 3.6Q5.4 2.8 4.6 3.6Q4.4 4.6 5.4 4.8Q6.6 5.2 6.2 6.2Q5.4 6.8 4.4 6.2M5.4 2.4V7.4" stroke="#222" stroke-width="0.7" fill="none"/>
<rect x="8" y="4.6" width="10.6" height="11.6" rx="0.8" fill="#2f80d8" stroke="#1a4f92" stroke-width="0.6"/><rect x="9.2" y="5.8" width="8.2" height="2.2" fill="#7fb8f0"/>
<path d="M9.4 9.2H11.6V11H9.4ZM12.2 9.2H14.4V11H12.2ZM15 9.2H17.2V11H15ZM9.4 11.6H11.6V13.4H9.4ZM12.2 11.6H14.4V13.4H12.2ZM15 11.6H17.2V13.4H15ZM9.4 14H11.6V15.6H9.4ZM12.2 14H14.4V15.6H12.2ZM15 14H17.2V15.6H15Z" fill="#14305c"/></svg>
<span class="t" style="left:820.40px;top:165px;font-size:13px;color:#1e2a3b;transform:scaleX(1.0219);transform-origin:0 50%;-webkit-text-stroke:0.25px #1e2a3b;">Expense</span>
<svg class="b" style="left:878.5px;top:168.5px;" width="10" height="7" viewBox="0 0 10 7"><path d="M0.6 6.2L5 1.2L9.4 6.2" stroke="#3a4454" stroke-width="1" fill="none"/></svg>
<div class="b" style="left:907px;top:153px;width:151.5px;height:37.5px;border:1px solid #d6dce4;box-sizing:border-box;background:#fff;"></div>
<svg class="b" style="left:920.2px;top:161.5px;" width="20" height="20" viewBox="0 0 20 20"><rect x="3.6" y="1.6" width="14.6" height="17" rx="1" fill="#ecebe8" stroke="#333" stroke-width="0.9"/><rect x="8.6" y="3.4" width="7" height="2" rx="0.6" fill="#5a9ad0" stroke="#333" stroke-width="0.4"/>
<rect x="6.6" y="8" width="4" height="1.8" fill="#b9b9b9"/><rect x="12" y="8" width="4" height="1.8" fill="#b9b9b9"/><path d="M6.4 11.8H16.4" stroke="#ccc" stroke-width="0.8"/><rect x="6.6" y="13.8" width="4" height="2" fill="#444"/><rect x="12" y="13.8" width="4" height="2" fill="#444"/>
<circle cx="4.6" cy="3.8" r="3.1" fill="#fff" stroke="#0e5a72" stroke-width="1.1"/><path d="M4.6 2.2V3.9H5.9" stroke="#c33" stroke-width="0.7" fill="none"/><rect x="3" y="8.4" width="1.5" height="9" fill="#e9b82e" stroke="#333" stroke-width="0.35"/><path d="M3 17.4H4.5L3.75 19.2Z" fill="#333"/></svg>
<span class="t" style="left:944.40px;top:165px;font-size:13px;color:#1e2a3b;transform:scaleX(1.0725);transform-origin:0 50%;-webkit-text-stroke:0.25px #1e2a3b;">Examinations</span>
<svg class="b" style="left:1034.5px;top:168.5px;" width="10" height="7" viewBox="0 0 10 7"><path d="M0.6 6.2L5 1.2L9.4 6.2" stroke="#3a4454" stroke-width="1" fill="none"/></svg>
<div class="b" style="left:1063px;top:153px;width:139.5px;height:37.5px;border:1px solid #d6dce4;box-sizing:border-box;background:#fff;"></div>
<svg class="b" style="left:1076.2px;top:161.5px;" width="20" height="20" viewBox="0 0 20 20"><rect x="0.8" y="0.6" width="15.6" height="18.6" fill="#37406a" stroke="#1b2140" stroke-width="0.5"/><rect x="1.4" y="1.2" width="3.4" height="17.4" fill="#5b8df0"/>
<path d="M2 3.4H4.2M2 5H4.2" stroke="#23305a" stroke-width="0.6"/><rect x="2" y="11" width="2.2" height="1.3" fill="#f0a030"/><rect x="2" y="13.6" width="2.2" height="1.3" fill="#6fd0b0"/><rect x="2" y="16.2" width="2.2" height="1.3" fill="#6fd0b0"/>
<circle cx="11.4" cy="4.4" r="2.9" fill="#fff"/><circle cx="10.4" cy="3.8" r="0.5" fill="#222"/><circle cx="12.4" cy="3.8" r="0.5" fill="#222"/><path d="M9.4 5.8Q11.4 7.8 13.4 5.8Z" fill="#f0b030"/><path d="M7 10H15M7 12H13" stroke="#252c52" stroke-width="0.8"/>
<circle cx="15.2" cy="15" r="4.5" fill="#5fd8aa" stroke="#eafff6" stroke-width="0.6"/><path d="M12.8 15L14.6 16.8L17.8 13.4" stroke="#1f6a4c" stroke-width="1.1" fill="none"/></svg>
<span class="t" style="left:1100.40px;top:165px;font-size:13px;color:#1e2a3b;transform:scaleX(1.0901);transform-origin:0 50%;-webkit-text-stroke:0.25px #1e2a3b;">Attendance</span>
<svg class="b" style="left:1178.5px;top:168.5px;" width="10" height="7" viewBox="0 0 10 7"><path d="M0.6 6.2L5 1.2L9.4 6.2" stroke="#3a4454" stroke-width="1" fill="none"/></svg>
<div class="b" style="left:1207px;top:153px;width:195.5px;height:37.5px;border:1px solid #d6dce4;box-sizing:border-box;background:#fff;"></div>
<svg class="b" style="left:1220.2px;top:161.5px;" width="20" height="20" viewBox="0 0 20 20"><rect x="1" y="0.8" width="11" height="18.4" rx="1.6" fill="#a9d4f7" stroke="#222" stroke-width="0.9"/><path d="M4.6 0.8H8.4V1.6Q8.4 2.2 7.8 2.2H5.2Q4.6 2.2 4.6 1.6Z" fill="#222"/>
<circle cx="4" cy="6" r="1.3" fill="#c8324a" stroke="#222" stroke-width="0.4"/><circle cx="4" cy="10.4" r="1.3" fill="#c8324a" stroke="#222" stroke-width="0.4"/><circle cx="4" cy="15" r="1.3" fill="#c8324a" stroke="#222" stroke-width="0.4"/>
<path d="M6.6 5.4H9.6M6.6 6.8H8.6M6.6 9.8H9.6M6.6 11.2H8.6M6.6 14.4H9.6M6.6 15.8H8.6" stroke="#222" stroke-width="0.8"/>
<circle cx="14.8" cy="8.6" r="3.6" fill="#fff" stroke="#222" stroke-width="0.8"/><path d="M14.8 5V3.8M13.8 3.6H15.8M14.8 8.6L16.4 7" stroke="#222" stroke-width="0.8"/></svg>
<span class="t" style="left:1244.40px;top:165px;font-size:13px;color:#1e2a3b;transform:scaleX(1.0710);transform-origin:0 50%;-webkit-text-stroke:0.25px #1e2a3b;">Online Examinations</span>
<svg class="b" style="left:1378.5px;top:168.5px;" width="10" height="7" viewBox="0 0 10 7"><path d="M0.6 6.2L5 1.2L9.4 6.2" stroke="#3a4454" stroke-width="1" fill="none"/></svg>
<div class="b" style="left:1407px;top:153px;width:135.5px;height:37.5px;border:1px solid #d6dce4;box-sizing:border-box;background:#fff;"></div>
<svg class="b" style="left:1420.2px;top:161.5px;" width="20" height="20" viewBox="0 0 20 20"><path d="M1.6 13A8.8 8.8 0 0 1 18.8 10.4Q19 13 17.8 15H1.6Z" fill="#56b890"/>
<path d="M5.4 3.6L12 1.2L18.4 3.6L12 6Z" fill="#e4e9ee" stroke="#4a5560" stroke-width="0.5"/><rect x="8.4" y="4.6" width="7.2" height="3.4" rx="1.2" fill="#f4f6f8" stroke="#4a5560" stroke-width="0.5"/><path d="M10.6 6.4H13.6" stroke="#8a949e" stroke-width="0.7"/>
<rect x="1.4" y="8" width="14.4" height="3.4" rx="1.2" fill="#dfe6ec" stroke="#3a4450" stroke-width="0.6"/><rect x="2.2" y="11.6" width="15" height="3.6" rx="1.2" fill="#e4574f" stroke="#3a4450" stroke-width="0.6"/><rect x="3.4" y="12.6" width="12" height="1.6" fill="#f9ece6"/>
<rect x="1" y="15.4" width="17.4" height="3.8" rx="1.2" fill="#efc27a" stroke="#3a4450" stroke-width="0.6"/><rect x="2.4" y="16.5" width="13.6" height="1.6" fill="#faf3e6"/></svg>
<span class="t" style="left:1444.40px;top:165px;font-size:13px;color:#1e2a3b;transform:scaleX(1.0648);transform-origin:0 50%;-webkit-text-stroke:0.25px #1e2a3b;">Academics</span>
<svg class="b" style="left:1518.5px;top:168.5px;" width="10" height="7" viewBox="0 0 10 7"><path d="M0.6 6.2L5 1.2L9.4 6.2" stroke="#3a4454" stroke-width="1" fill="none"/></svg>
<div class="b" style="left:1547px;top:153px;width:141.5px;height:37.5px;border:1px solid #d6dce4;box-sizing:border-box;background:#fff;"></div>
<svg class="b" style="left:1560.2px;top:161.5px;" width="20" height="20" viewBox="0 0 20 20"><rect x="0.8" y="1.8" width="17.4" height="15.8" rx="0.8" fill="#f4f4f4" stroke="#333" stroke-width="0.8"/><path d="M0.8 1.8H18.2V5.4H0.8Z" fill="#e8572e" stroke="#333" stroke-width="0.7"/><path d="M3 0.4V3M16 0.4V3" stroke="#333" stroke-width="1"/>
<path d="M2.4 7.4H16.6M2.4 9.8H16.6M2.4 12.2H16.6M2.4 14.6H16.6M4.8 6.4V16.6M7.4 6.4V16.6M10 6.4V16.6M12.6 6.4V16.6M15 6.4V16.6" stroke="#555" stroke-width="0.7"/>
<rect x="12.8" y="7.6" width="3.6" height="2" fill="#f4b860"/><rect x="10.2" y="10" width="5.6" height="2" fill="#4a5a7a"/>
<circle cx="16" cy="16.2" r="3.5" fill="#1fc07a" stroke="#0a7a4a" stroke-width="0.5"/><path d="M14.2 16.2L15.6 17.6L17.8 15" stroke="#fff" stroke-width="1" fill="none"/></svg>
<span class="t" style="left:1584.40px;top:165px;font-size:13px;color:#1e2a3b;transform:scaleX(1.0300);transform-origin:0 50%;-webkit-text-stroke:0.25px #1e2a3b;">Lesson Plan</span>
<svg class="b" style="left:1664.5px;top:168.5px;" width="10" height="7" viewBox="0 0 10 7"><path d="M0.6 6.2L5 1.2L9.4 6.2" stroke="#3a4454" stroke-width="1" fill="none"/></svg>
<div class="b" style="left:1693px;top:153px;width:173.5px;height:37.5px;border:1px solid #d6dce4;box-sizing:border-box;background:#fff;"></div>
<svg class="b" style="left:1706.2px;top:161.5px;" width="20" height="20" viewBox="0 0 20 20"><circle cx="10" cy="10" r="9.2" fill="#f2f2f2" stroke="#333" stroke-width="0.7"/>
<circle cx="3.6" cy="3.4" r="2.6" fill="#f0c838" stroke="#333" stroke-width="0.6"/><circle cx="16.4" cy="3.6" r="3" fill="#2f9fe0" stroke="#123" stroke-width="0.6"/><path d="M13.6 3.6H19.2M16.4 0.8V6.4" stroke="#123" stroke-width="0.5"/>
<rect x="10.6" y="2" width="3" height="4" fill="#444"/>
<circle cx="5" cy="8" r="2.4" fill="#e8c0a0" stroke="#333" stroke-width="0.5"/><path d="M2.6 7.4Q5 4.4 7.4 7.4" fill="#555"/><circle cx="15.4" cy="9" r="2.2" fill="#e8c0a0" stroke="#333" stroke-width="0.5"/>
<circle cx="10" cy="9.8" r="3.2" fill="#f0b890" stroke="#333" stroke-width="0.5"/><path d="M6.8 9Q10 4.4 13.2 9Q10 7.4 6.8 9Z" fill="#d86a28"/>
<path d="M5 19Q5 13.6 10 13.6Q15 13.6 15 19Z" fill="#7ac050" stroke="#333" stroke-width="0.5"/><path d="M1 15Q2 11.4 5 11.6L6.4 16L3.4 18.8Z" fill="#38a8e8" stroke="#333" stroke-width="0.4"/><path d="M0.8 18.8L3 15.4L5.4 19.2Z" fill="#c84838"/>
<path d="M13.4 12L15.4 10.8L17.4 13.2L15.6 14.6Z" fill="#e85848"/><circle cx="16.4" cy="16.2" r="2.9" fill="#f0c838" stroke="#333" stroke-width="0.6"/><path d="M16.4 14.8V17.6" stroke="#333" stroke-width="0.8"/></svg>
<span class="t" style="left:1730.40px;top:165px;font-size:13px;color:#1e2a3b;transform:scaleX(1.0449);transform-origin:0 50%;-webkit-text-stroke:0.25px #1e2a3b;">Human Resource</span>
<svg class="b" style="left:1842.5px;top:168.5px;" width="10" height="7" viewBox="0 0 10 7"><path d="M0.6 6.2L5 1.2L9.4 6.2" stroke="#3a4454" stroke-width="1" fill="none"/></svg>
<div class="b" style="left:133.3px;top:195px;width:154.5px;height:37.5px;border:1px solid #d6dce4;box-sizing:border-box;background:#fff;"></div>
<svg class="b" style="left:146.5px;top:203.5px;" width="20" height="20" viewBox="0 0 20 20"><path d="M12.6 7.2Q20 7.4 19.8 13Q19.6 16 17.4 17.2L18 19.4L14.8 18Q8 18.4 7.6 13Q7.6 9 12.6 7.2Z" fill="#dcdcdc" stroke="#444" stroke-width="0.6"/>
<circle cx="13.6" cy="13" r="0.7" fill="#444"/><circle cx="15.8" cy="13" r="0.7" fill="#444"/><circle cx="18" cy="13" r="0.7" fill="#444"/>
<path d="M6.6 0.6Q12.6 0.6 12.8 5.8Q12.8 10.6 6.8 11.2Q5 11.2 3.6 10.6L1.2 13L1.8 9.6Q0.4 8 0.4 5.8Q0.6 0.8 6.6 0.6Z" fill="#14d0b4" stroke="#0a6a5e" stroke-width="0.6"/>
<circle cx="4.2" cy="5.8" r="0.8" fill="#0a4a42"/><circle cx="6.6" cy="5.8" r="0.8" fill="#0a4a42"/><circle cx="9" cy="5.8" r="0.8" fill="#0a4a42"/></svg>
<span class="t" style="left:170.70px;top:207px;font-size:13px;color:#1e2a3b;transform:scaleX(1.0811);transform-origin:0 50%;-webkit-text-stroke:0.25px #1e2a3b;">Communicate</span>
<svg class="b" style="left:263.8px;top:210.5px;" width="10" height="7" viewBox="0 0 10 7"><path d="M0.6 6.2L5 1.2L9.4 6.2" stroke="#3a4454" stroke-width="1" fill="none"/></svg>
<div class="b" style="left:292px;top:195px;width:175.5px;height:37.5px;border:1px solid #d6dce4;box-sizing:border-box;background:#fff;"></div>
<svg class="b" style="left:305.2px;top:203.5px;" width="20" height="20" viewBox="0 0 20 20"><path d="M3.6 0.8H16.4V3H3.6Z" fill="#d8b82a" stroke="#6a5a10" stroke-width="0.4"/><path d="M3 2.6H17V13H3Z" fill="#f8e48a" stroke="#6a5a10" stroke-width="0.5"/>
<path d="M8.6 3.8H11.4V7.4H13.6L10 11L6.4 7.4H8.6Z" fill="#e8302a" stroke="#8a1410" stroke-width="0.4"/>
<path d="M0.8 10.2L3 9V12.4H17V9L19.2 10.2V17.6Q19.2 19.2 17.6 19.2H2.4Q0.8 19.2 0.8 17.6Z" fill="#c86a42" stroke="#6a3018" stroke-width="0.6"/><path d="M0.8 12.6H19.2" stroke="#a85030" stroke-width="0.6"/><rect x="4.6" y="15" width="10.8" height="2.2" fill="#f6f0ea" stroke="#6a3018" stroke-width="0.4"/></svg>
<span class="t" style="left:329.40px;top:207px;font-size:13px;color:#1e2a3b;transform:scaleX(1.0722);transform-origin:0 50%;-webkit-text-stroke:0.25px #1e2a3b;">Download Center</span>
<svg class="b" style="left:443.5px;top:210.5px;" width="10" height="7" viewBox="0 0 10 7"><path d="M0.6 6.2L5 1.2L9.4 6.2" stroke="#3a4454" stroke-width="1" fill="none"/></svg>
<div class="b" style="left:472px;top:195px;width:135.5px;height:37.5px;border:1px solid #d6dce4;box-sizing:border-box;background:#fff;"></div>
<svg class="b" style="left:485.2px;top:203.5px;" width="20" height="20" viewBox="0 0 20 20"><rect x="1.6" y="0.8" width="13" height="16.4" rx="1.6" fill="#f48a9a" stroke="#333" stroke-width="0.8"/><rect x="4.4" y="1.4" width="9.6" height="15.2" rx="1" fill="#6ecbf0" stroke="#333" stroke-width="0.5"/>
<path d="M0.6 3.4H3M0.6 6H3M0.6 8.6H3M0.6 11.2H3M0.6 13.8H3" stroke="#333" stroke-width="1.1" stroke-linecap="round"/><path d="M8 4H11" stroke="#333" stroke-width="0.6"/>
<g transform="rotate(40 12 11)"><rect x="9" y="2.2" width="6.4" height="4" rx="1.4" fill="#f7a0ac" stroke="#333" stroke-width="0.6"/><rect x="9" y="5.8" width="6.4" height="1.6" fill="#555" stroke="#333" stroke-width="0.4"/><rect x="9" y="7.4" width="6.4" height="8.6" fill="#2cc47a" stroke="#333" stroke-width="0.6"/><rect x="11.2" y="10.4" width="2" height="2" fill="#fff" stroke="#333" stroke-width="0.4"/><path d="M9 16H15.4L12.2 20.4Z" fill="#f0c080" stroke="#333" stroke-width="0.5"/></g></svg>
<span class="t" style="left:509.40px;top:207px;font-size:13px;color:#1e2a3b;transform:scaleX(1.0897);transform-origin:0 50%;-webkit-text-stroke:0.25px #1e2a3b;">Homework</span>
<svg class="b" style="left:583.5px;top:210.5px;" width="10" height="7" viewBox="0 0 10 7"><path d="M0.6 6.2L5 1.2L9.4 6.2" stroke="#3a4454" stroke-width="1" fill="none"/></svg>
<div class="b" style="left:612px;top:195px;width:110.5px;height:37.5px;border:1px solid #d6dce4;box-sizing:border-box;background:#fff;"></div>
<svg class="b" style="left:625.2px;top:203.5px;" width="20" height="20" viewBox="0 0 20 20"><rect x="0.4" y="0.6" width="19.2" height="19" fill="#5a2a30"/>
<path d="M1.4 5.4H18.6M1.4 10.2H18.6M1.4 15H18.6" stroke="#2a1216" stroke-width="0.8"/>
<rect x="1.6" y="1.6" width="3.4" height="3.2" fill="#e05a3a"/><rect x="5.6" y="2.4" width="1.2" height="2.4" fill="#f0d8b0"/><rect x="8" y="1.4" width="1.6" height="3.4" fill="#e8e0d8"/><rect x="11" y="2" width="3" height="2.8" fill="#3a1a20"/><rect x="15" y="1.6" width="3.2" height="1.6" fill="#f4ece4"/>
<rect x="1.8" y="6.4" width="5" height="1.2" fill="#c8503a"/><rect x="1.8" y="8.2" width="4" height="1.2" fill="#f0c890"/><path d="M8.6 9.6L10.6 6.4L12.6 9.6Z" fill="#f0b888"/><rect x="13.6" y="6.4" width="1.4" height="3.2" fill="#e8d8c8"/><rect x="15.8" y="6.8" width="2.4" height="2.8" fill="#c8604a"/>
<rect x="1.6" y="11.2" width="1.4" height="3.2" fill="#e8a078"/><rect x="3.6" y="11.6" width="4.6" height="2.8" fill="#f4c898"/><rect x="9.4" y="11" width="1.2" height="3.4" fill="#d85a40"/><rect x="11.4" y="11.6" width="2.6" height="2.8" fill="#a83a30"/><rect x="15" y="11" width="3.4" height="1.4" fill="#f0d0b0"/>
<rect x="1.6" y="16" width="2.4" height="3" fill="#e0583a"/><rect x="4.6" y="16.4" width="4.4" height="2.6" fill="#f0c090"/><rect x="10" y="16" width="3" height="3" fill="#c84a38"/><rect x="14.4" y="16.6" width="2.6" height="1.6" fill="#6aa830"/><rect x="17.4" y="16" width="1.2" height="3" fill="#e8d0c0"/></svg>
<span class="t" style="left:649.40px;top:207px;font-size:13px;color:#1e2a3b;transform:scaleX(1.0745);transform-origin:0 50%;-webkit-text-stroke:0.25px #1e2a3b;">Library</span>
<svg class="b" style="left:698.5px;top:210.5px;" width="10" height="7" viewBox="0 0 10 7"><path d="M0.6 6.2L5 1.2L9.4 6.2" stroke="#3a4454" stroke-width="1" fill="none"/></svg>
<div class="b" style="left:727px;top:195px;width:126.5px;height:37.5px;border:1px solid #d6dce4;box-sizing:border-box;background:#fff;"></div>
<svg class="b" style="left:740.2px;top:203.5px;" width="20" height="20" viewBox="0 0 20 20"><circle cx="12.2" cy="2.6" r="2.5" fill="#2cb050" stroke="#145a28" stroke-width="0.5"/><path d="M11 2.6H13.4" stroke="#fff" stroke-width="0.7"/>
<rect x="12.4" y="2.4" width="6.4" height="8.4" fill="#f0f2f6" stroke="#4a5560" stroke-width="0.6"/><path d="M14 5H17.4M14 6.8H17.4M14 8.6H16.4" stroke="#333" stroke-width="0.7"/>
<rect x="4.2" y="7.4" width="6.4" height="5.2" fill="#f8c8a0" stroke="#8a4a2a" stroke-width="0.5"/><rect x="6.4" y="7.4" width="2" height="2" fill="#d83a4a"/>
<rect x="2.4" y="12.6" width="8.6" height="5.4" fill="#f4a870" stroke="#8a4a2a" stroke-width="0.5"/><rect x="5.6" y="12.6" width="2" height="2" fill="#d83a4a"/>
<rect x="11.6" y="12.6" width="5.6" height="5.4" fill="#f8c8a0" stroke="#8a4a2a" stroke-width="0.5"/><rect x="13.6" y="12.6" width="1.6" height="1.8" fill="#d83a4a"/>
<rect x="0.6" y="18" width="18.8" height="1.6" fill="#8a6a10" stroke="#4a3a08" stroke-width="0.3"/></svg>
<span class="t" style="left:764.40px;top:207px;font-size:13px;color:#1e2a3b;transform:scaleX(1.0977);transform-origin:0 50%;-webkit-text-stroke:0.25px #1e2a3b;">Inventory</span>
<svg class="b" style="left:829.5px;top:210.5px;" width="10" height="7" viewBox="0 0 10 7"><path d="M0.6 6.2L5 1.2L9.4 6.2" stroke="#3a4454" stroke-width="1" fill="none"/></svg>
<div class="b" style="left:858px;top:195px;width:126.5px;height:37.5px;border:1px solid #d6dce4;box-sizing:border-box;background:#fff;"></div>
<svg class="b" style="left:871.2px;top:203.5px;" width="20" height="20" viewBox="0 0 20 20"><path d="M0.4 19.2H19.6" stroke="#999" stroke-width="0.5"/>
<path d="M4.2 3Q4.2 0.8 6.4 0.8H13.6Q15.8 0.8 15.8 3V5.6H4.2Z" fill="#f0c878" stroke="#5a4a30" stroke-width="0.6"/><path d="M7.4 2.6H12.6" stroke="#5a4a30" stroke-width="0.9"/>
<rect x="0.8" y="4.6" width="2.2" height="3" fill="#f0c878" stroke="#5a4a30" stroke-width="0.5"/><rect x="17" y="4.6" width="2.2" height="3" fill="#f0c878" stroke="#5a4a30" stroke-width="0.5"/>
<path d="M3.2 5.4H16.8V16.4H3.2Z" fill="#f0c878" stroke="#5a4a30" stroke-width="0.6"/><rect x="5" y="5.2" width="10" height="4.8" rx="0.6" fill="#eaf4f8" stroke="#5a4a30" stroke-width="0.5"/><path d="M10 5.2V10" stroke="#5a4a30" stroke-width="0.5"/>
<circle cx="5.6" cy="12.8" r="0.9" fill="#444"/><circle cx="14.4" cy="12.8" r="0.9" fill="#444"/><rect x="8" y="11.8" width="4" height="2.2" fill="#555"/><rect x="2.6" y="14.8" width="14.8" height="1.8" fill="#444"/>
<rect x="4" y="16.6" width="2.6" height="2.4" fill="#333"/><rect x="13.4" y="16.6" width="2.6" height="2.4" fill="#333"/></svg>
<span class="t" style="left:895.40px;top:207px;font-size:13px;color:#1e2a3b;transform:scaleX(1.0644);transform-origin:0 50%;-webkit-text-stroke:0.25px #1e2a3b;">Transport</span>
<svg class="b" style="left:960.5px;top:210.5px;" width="10" height="7" viewBox="0 0 10 7"><path d="M0.6 6.2L5 1.2L9.4 6.2" stroke="#3a4454" stroke-width="1" fill="none"/></svg>
<div class="b" style="left:989px;top:195px;width:106.5px;height:37.5px;border:1px solid #d6dce4;box-sizing:border-box;background:#fff;"></div>
<svg class="b" style="left:1002.2px;top:203.5px;" width="20" height="20" viewBox="0 0 20 20"><path d="M1.6 1.6V19.4M18.4 1.6V19.4" stroke="#3a2a22" stroke-width="1.8"/>
<rect x="1.6" y="5.6" width="16.8" height="1.8" fill="#3a2a22"/><rect x="1.6" y="14.2" width="16.8" height="1.8" fill="#3a2a22"/>
<rect x="2.6" y="3.6" width="11" height="2.2" rx="0.6" fill="#f4a820"/><rect x="14" y="3.4" width="3.6" height="2.4" rx="0.8" fill="#cfe8f6"/>
<rect x="2.6" y="12.2" width="11" height="2.2" rx="0.6" fill="#3aa0e8"/><rect x="14" y="12" width="3.6" height="2.4" rx="0.8" fill="#cfe8f6"/>
<path d="M5.4 7.4V14.2M7.6 7.4V14.2M5.4 9.6H7.6M5.4 11.8H7.6" stroke="#777" stroke-width="0.6"/><path d="M3 17.6H8" stroke="#888" stroke-width="0.6"/></svg>
<span class="t" style="left:1026.40px;top:207px;font-size:13px;color:#1e2a3b;transform:scaleX(1.0502);transform-origin:0 50%;-webkit-text-stroke:0.25px #1e2a3b;">Hostel</span>
<svg class="b" style="left:1071.5px;top:210.5px;" width="10" height="7" viewBox="0 0 10 7"><path d="M0.6 6.2L5 1.2L9.4 6.2" stroke="#3a4454" stroke-width="1" fill="none"/></svg>
<div class="b" style="left:1100px;top:195px;width:131.5px;height:37.5px;border:1px solid #d6dce4;box-sizing:border-box;background:#fff;"></div>
<svg class="b" style="left:1113.2px;top:203.5px;" width="20" height="20" viewBox="0 0 20 20"><path d="M3.6 0.8H14.8Q15.6 0.8 15.6 1.6V18.4Q15.6 19.2 14.8 19.2H1.8Q1 19.2 1 18.4V3.4Z" fill="#f4f8fb" stroke="#333" stroke-width="0.8"/><path d="M1 3.4L3.6 0.8V3.4Z" fill="#e0484a"/>
<rect x="6.4" y="2.4" width="6.4" height="1.8" rx="0.6" fill="#c8d8f0" stroke="#334" stroke-width="0.5"/>
<path d="M3 7.2H10.4M3 9.4H10.4M3 11.6H10.4M3 13.8H9" stroke="#333" stroke-width="0.8"/><path d="M3 16.8H6" stroke="#222" stroke-width="1"/>
<path d="M14 13.4H17.6V18.8L15.8 17.6L14 18.8Z" fill="#e09a28" stroke="#8a5a10" stroke-width="0.4"/><circle cx="15.8" cy="10.8" r="3.7" fill="#f2b838" stroke="#a87818" stroke-width="0.6"/><circle cx="15.8" cy="10.8" r="2" fill="#f8d070" stroke="#a87818" stroke-width="0.4"/></svg>
<span class="t" style="left:1137.40px;top:207px;font-size:13px;color:#1e2a3b;transform:scaleX(1.0885);transform-origin:0 50%;-webkit-text-stroke:0.25px #1e2a3b;">Certificate</span>
<svg class="b" style="left:1207.5px;top:210.5px;" width="10" height="7" viewBox="0 0 10 7"><path d="M0.6 6.2L5 1.2L9.4 6.2" stroke="#3a4454" stroke-width="1" fill="none"/></svg>
<div class="b" style="left:1236px;top:195px;width:131.5px;height:37.5px;border:1px solid #d6dce4;box-sizing:border-box;background:#fff;"></div>
<svg class="b" style="left:1249.2px;top:203.5px;" width="20" height="20" viewBox="0 0 20 20"><path d="M3 1.4V18.6M10 1.4V18.6M17 1.4V18.6M3 1.4H17M3 18.6H17M3 10H17" stroke="#2a4fd0" stroke-width="0.7"/>
<rect x="0.8" y="3.4" width="4.4" height="13.2" rx="1.4" fill="#3a8af0" stroke="#1a3ab0" stroke-width="0.5"/><rect x="7.8" y="3.4" width="4.4" height="13.2" rx="1.4" fill="#3a8af0" stroke="#1a3ab0" stroke-width="0.5"/><rect x="14.8" y="3.4" width="4.4" height="13.2" rx="1.4" fill="#3a8af0" stroke="#1a3ab0" stroke-width="0.5"/>
<path d="M0.8 6.4H5.2M0.8 13.6H5.2M7.8 6.4H12.2M7.8 13.6H12.2M14.8 6.4H19.2M14.8 13.6H19.2" stroke="#1a3ab0" stroke-width="0.6"/>
<g fill="#2a5ae0"><circle cx="3" cy="1.4" r="1"/><circle cx="10" cy="1.4" r="1"/><circle cx="17" cy="1.4" r="1"/><circle cx="3" cy="18.6" r="1"/><circle cx="10" cy="18.6" r="1"/><circle cx="17" cy="18.6" r="1"/></g></svg>
<span class="t" style="left:1273.40px;top:207px;font-size:13px;color:#1e2a3b;transform:scaleX(1.0136);transform-origin:0 50%;-webkit-text-stroke:0.25px #1e2a3b;">Front CMS</span>
<svg class="b" style="left:1343.5px;top:210.5px;" width="10" height="7" viewBox="0 0 10 7"><path d="M0.6 6.2L5 1.2L9.4 6.2" stroke="#3a4454" stroke-width="1" fill="none"/></svg>
<div class="b" style="left:1372px;top:195px;width:111.5px;height:37.5px;border:1px solid #d6dce4;box-sizing:border-box;background:#fff;"></div>
<svg class="b" style="left:1385.2px;top:203.5px;" width="20" height="20" viewBox="0 0 20 20"><path d="M1.4 19.4V17.2Q1.4 14.2 4.4 13.4L7.6 12.4H12.4L15.6 13.4Q18.6 14.2 18.6 17.2V19.4Z" fill="#5a5a5e" stroke="#222" stroke-width="0.6"/>
<path d="M7.6 12.4L10 15.4L12.4 12.4Z" fill="#fff" stroke="#333" stroke-width="0.4"/><path d="M6 13L10 18.6L14 13" stroke="#e0b020" stroke-width="1" fill="none"/>
<path d="M6.6 5.4Q6.4 11.6 10 11.8Q13.6 11.6 13.4 5.4Z" fill="#f8e0d4" stroke="#333" stroke-width="0.5"/>
<path d="M3.4 3.2L10 0.6L16.6 3.2L10 5.6Z" fill="#333" stroke="#111" stroke-width="0.4"/><path d="M6.2 4.4V6.4Q10 7.6 13.8 6.4V4.4L10 5.8Z" fill="#3a3a3e"/><path d="M16.2 3.4V6.6" stroke="#222" stroke-width="0.6"/><circle cx="16.2" cy="7" r="0.7" fill="#222"/></svg>
<span class="t" style="left:1409.40px;top:207px;font-size:13px;color:#1e2a3b;transform:scaleX(1.0997);transform-origin:0 50%;-webkit-text-stroke:0.25px #1e2a3b;">Alumni</span>
<svg class="b" style="left:1459.5px;top:210.5px;" width="10" height="7" viewBox="0 0 10 7"><path d="M0.6 6.2L5 1.2L9.4 6.2" stroke="#3a4454" stroke-width="1" fill="none"/></svg>
<div class="b" style="left:1488px;top:195px;width:116.5px;height:37.5px;border:1px solid #d6dce4;box-sizing:border-box;background:#fff;"></div>
<svg class="b" style="left:1501.2px;top:203.5px;" width="20" height="20" viewBox="0 0 20 20"><path d="M3 0.8H12.4L14.6 3V18Q14.6 19.2 13.4 19.2H3Q1.6 19.2 1.6 18V2.2Q1.6 0.8 3 0.8Z" fill="#f2eee4" stroke="#3a3428" stroke-width="1"/>
<path d="M5.4 4.6H10.4M5.4 6.6H10.4M5.4 8.6H9" stroke="#8a8478" stroke-width="0.8"/>
<rect x="5.6" y="14" width="1.6" height="3.2" fill="#e8584a"/><rect x="7.6" y="12" width="1.6" height="5.2" fill="#4a9a5a"/><rect x="9.6" y="13.4" width="1.6" height="3.8" fill="#4a6ad0"/>
<circle cx="15.2" cy="9.4" r="4.4" fill="#f0e45a" stroke="#3a3428" stroke-width="0.6"/><path d="M15.2 9.4V5A4.4 4.4 0 0 1 19.4 10.6Z" fill="#8ac0f0" stroke="#3a3428" stroke-width="0.4"/><path d="M15.2 9.4L19.4 10.6A4.4 4.4 0 0 1 12 12.4Z" fill="#f4a0d4" stroke="#3a3428" stroke-width="0.4"/></svg>
<span class="t" style="left:1525.40px;top:207px;font-size:13px;color:#1e2a3b;transform:scaleX(1.0699);transform-origin:0 50%;-webkit-text-stroke:0.25px #1e2a3b;">Reports</span>
<svg class="b" style="left:1580.5px;top:210.5px;" width="10" height="7" viewBox="0 0 10 7"><path d="M0.6 6.2L5 1.2L9.4 6.2" stroke="#3a4454" stroke-width="1" fill="none"/></svg>
<div class="b" style="left:1609px;top:195px;width:160.5px;height:37.5px;border:1px solid #d6dce4;box-sizing:border-box;background:#fff;"></div>
<svg class="b" style="left:1622.2px;top:203.5px;" width="20" height="20" viewBox="0 0 20 20"><circle cx="10" cy="10" r="9.2" fill="none" stroke="#222" stroke-width="0.7" stroke-dasharray="22 4 18 3"/>
<path d="M10 3L11.6 4.6L13.8 4L14.6 6.2L16.8 6.8L16.4 9.2L18 10.8L16.4 12.4L16.8 14.6L14.6 15.2L13.8 17.4L11.6 16.8L10 18.4L8.4 16.8L6.2 17.4L5.4 15.2L3.2 14.6L3.6 12.4L2 10.8L3.6 9.2L3.2 6.8L5.4 6.2L6.2 4L8.4 4.6Z" fill="#6ac8f4" stroke="#222" stroke-width="0.7" transform="translate(0 -0.7)"/>
<circle cx="10" cy="10" r="3.4" fill="#fff" stroke="#222" stroke-width="0.8"/>
<ellipse cx="16.6" cy="2.8" rx="0.9" ry="1.3" fill="#e04a5a" transform="rotate(30 16.6 2.8)"/><ellipse cx="3.4" cy="17.2" rx="0.9" ry="1.3" fill="#b8c828" transform="rotate(30 3.4 17.2)"/></svg>
<span class="t" style="left:1646.40px;top:207px;font-size:13px;color:#1e2a3b;transform:scaleX(1.0603);transform-origin:0 50%;-webkit-text-stroke:0.25px #1e2a3b;">System Setting</span>
<svg class="b" style="left:1745.5px;top:210.5px;" width="10" height="7" viewBox="0 0 10 7"><path d="M0.6 6.2L5 1.2L9.4 6.2" stroke="#3a4454" stroke-width="1" fill="none"/></svg>
<div class="b" style="left:1903px;top:81px;width:17px;height:951px;background:#f1f1f1;"></div>
<div class="b" style="left:1905px;top:98px;width:13px;height:579px;background:#c1c1c1;"></div>
<svg class="b" style="left:1908px;top:88px;" width="7" height="4" viewBox="0 0 7 4"><path d="M0 4L3.5 0L7 4Z" fill="#a3a3a3"/></svg>
<svg class="b" style="left:1908px;top:1021px;" width="7" height="4" viewBox="0 0 7 4"><path d="M0 0L3.5 4L7 0Z" fill="#505050"/></svg>
</div></div>
<div class="b" style="left:0px;top:0px;width:1920px;height:40px;background:#ebecf1;"></div>
<div class="b" style="left:0px;top:40px;width:1920px;height:41px;background:#f5f6f9;"></div>
<div class="b" style="left:0px;top:80px;width:1920px;height:1px;background:#e3e5ea;"></div>
<div class="b" style="left:8px;top:5px;width:25px;height:30px;background:#f0e5d0;border-radius:8px;"></div>
<div class="b" style="left:37px;top:5px;width:25px;height:30px;background:#cfddf2;border-radius:8px;"></div>
<span class="t" style="left:16.33px;top:16px;font-size:12.5px;color:#f29900;-webkit-text-stroke:0.55px #f29900;">E</span>
<span class="t" style="left:45.68px;top:16px;font-size:12.5px;color:#1a73e8;-webkit-text-stroke:0.55px #1a73e8;">F</span>
<div class="b" style="left:10px;top:38px;width:21px;height:2px;background:#f3bd4f;border-radius:2px 2px 0 0;"></div>
<div class="b" style="left:39px;top:38px;width:21px;height:2px;background:#6a9de6;border-radius:2px 2px 0 0;"></div>
<div class="b" style="left:189px;top:4px;width:119px;height:32px;background:#fff;border-radius:8px;box-shadow:0 0 2px rgba(0,0,0,.08);"></div>
<span class="t" style="left:100px;top:14px;font-size:12px;color:#5a5d63;width:78px;height:14px;overflow:hidden;-webkit-mask-image:linear-gradient(90deg,#000 68px,transparent 78px);"><span style="display:inline-block;transform:scaleX(1.0);transform-origin:0 50%;">Dummy Data f</span></span>
<svg class="b" style="left:76px;top:12px;" width="16" height="16" viewBox="0 0 16 16"><rect width="16" height="16" rx="2.5" fill="#74aa9c"/><circle cx="8" cy="8" r="4.6" stroke="#fff" stroke-width="1" fill="none"/><circle cx="8" cy="8" r="2" stroke="#fff" stroke-width="0.9" fill="none"/><path d="M8 3.4V8M4 10.3L8 8M12 10.3L8 8" stroke="#fff" stroke-width="0.8"/></svg>
<span class="t" style="left:224px;top:14px;font-size:12px;color:#3c4043;width:56px;height:14px;overflow:hidden;-webkit-mask-image:linear-gradient(90deg,#000 42px,transparent 56px);"><span style="display:inline-block;transform:scaleX(1.0);transform-origin:0 50%;">Dashboard</span></span>
<svg class="b" style="left:200px;top:12px;" width="16" height="16" viewBox="0 0 16 16"><circle cx="8" cy="8" r="7" fill="#464a52"/><path d="M3 5.5Q5.5 6.5 6.5 5Q7.5 3.2 9.5 3.4Q9.2 5.6 7.6 6.6Q6.4 7.6 7.4 8.6Q9.4 9 9.2 11.2Q8.6 13 7 12.6Q6.2 10.6 4.6 10.2Q2.6 9 3 5.5Z" fill="#fff"/><path d="M11 6Q12.6 6.4 13.4 8Q13.6 10 12.2 11.4Q11 10.4 11.4 9Q10.2 7.4 11 6Z" fill="#fff"/></svg>
<span class="t" style="left:346px;top:14px;font-size:12px;color:#5a5d63;width:78px;height:14px;overflow:hidden;-webkit-mask-image:linear-gradient(90deg,#000 68px,transparent 78px);"><span style="display:inline-block;transform:scaleX(1.0);transform-origin:0 50%;">School demo</span></span>
<svg class="b" style="left:322px;top:12px;" width="17" height="16" viewBox="0 0 17 16"><path d="M2.5 2Q0.5 8 3 14M4.5 2Q3.5 7 5 12M3 9L6.5 5.5M3.5 9.5L7 13" stroke="#e02020" stroke-width="1.3" fill="none"/><rect x="7.5" y="6" width="9" height="5" rx="0.5" fill="#e84a4a"/><path d="M8.5 7V10M10.5 7V10M12.5 7V10M14.5 7V10" stroke="#fff" stroke-width="0.7"/></svg>
<span class="t" style="left:468px;top:14px;font-size:12px;color:#5a5d63;width:78px;height:14px;overflow:hidden;-webkit-mask-image:linear-gradient(90deg,#000 68px,transparent 78px);"><span style="display:inline-block;transform:scaleX(0.985);transform-origin:0 50%;">Search results</span></span>
<svg class="b" style="left:444px;top:12px;" width="16" height="16" viewBox="0 0 16 16"><path d="M0 0.6H16L13.4 5.2H5.6L8.2 9.8L8 15.6Z" fill="#1fd6c0"/><path d="M9.4 7.2H12.2L8 15.6L7 13.4Z" fill="#17bfa8"/><path d="M0 0.6L8 15.6L8.4 11Z" fill="#1fd6c0"/></svg>
<span class="t" style="left:590px;top:14px;font-size:12px;color:#5a5d63;width:78px;height:14px;overflow:hidden;-webkit-mask-image:linear-gradient(90deg,#000 68px,transparent 78px);"><span style="display:inline-block;transform:scaleX(1.0);transform-origin:0 50%;">Utilities for lay</span></span>
<svg class="b" style="left:566px;top:12px;" width="16" height="16" viewBox="0 0 16 16"><rect width="16" height="16" rx="3.2" fill="#7112f5"/><text x="8" y="12.3" font-family="Liberation Sans, sans-serif" font-size="11.5" font-weight="700" fill="#fff" text-anchor="middle">B</text></svg>
<span class="t" style="left:712px;top:14px;font-size:12px;color:#5a5d63;width:78px;height:14px;overflow:hidden;-webkit-mask-image:linear-gradient(90deg,#000 68px,transparent 78px);"><span style="display:inline-block;transform:scaleX(1.0);transform-origin:0 50%;">Bootstrap Icon</span></span>
<svg class="b" style="left:688px;top:12px;" width="16" height="16" viewBox="0 0 16 16"><rect width="16" height="16" rx="3.2" fill="#7112f5"/><text x="8" y="12.3" font-family="Liberation Sans, sans-serif" font-size="11.5" font-weight="700" fill="#fff" text-anchor="middle">B</text></svg>
<span class="t" style="left:834px;top:14px;font-size:12px;color:#5a5d63;width:78px;height:14px;overflow:hidden;-webkit-mask-image:linear-gradient(90deg,#000 68px,transparent 78px);"><span style="display:inline-block;transform:scaleX(1.0);transform-origin:0 50%;">dangrossman/</span></span>
<svg class="b" style="left:810px;top:12px;" width="16" height="16" viewBox="0 0 16 16"><circle cx="8" cy="8" r="6.9" fill="#f4f4f6" stroke="#9a9da3" stroke-width="1.1"/><path d="M8 3.6Q4.6 3.6 4.4 7Q4.4 9.4 6.6 10.2Q6 11 6.2 14H9.8Q10 11 9.4 10.2Q11.6 9.4 11.6 7Q11.4 3.6 8 3.6Z" fill="#63666d"/><path d="M4.8 3.4L5.1 5.4L6.5 4.2ZM11.2 3.4L10.9 5.4L9.5 4.2Z" fill="#63666d"/></svg>
<span class="t" style="left:956px;top:14px;font-size:12px;color:#5a5d63;width:78px;height:14px;overflow:hidden;-webkit-mask-image:linear-gradient(90deg,#000 68px,transparent 78px);"><span style="display:inline-block;transform:scaleX(1.0);transform-origin:0 50%;">javascript - Inc</span></span>
<svg class="b" style="left:932px;top:12px;" width="16" height="16" viewBox="0 0 16 16"><path d="M2.5 9.5V14.5H11.5V9.5" stroke="#9a9da3" stroke-width="1.3" fill="none"/><path d="M4.5 12.4H9.6M4.7 10.2L9.7 10.9M5.4 7.6L10.1 9.3M7 4.6L10.9 7.6M9.4 2L12.2 6" stroke="#f48024" stroke-width="1.3" fill="none"/></svg>
<span class="t" style="left:1078px;top:14px;font-size:12px;color:#5a5d63;width:78px;height:14px;overflow:hidden;-webkit-mask-image:linear-gradient(90deg,#000 68px,transparent 78px);"><span style="display:inline-block;transform:scaleX(0.945);transform-origin:0 50%;">server31.hostla</span></span>
<svg class="b" style="left:1054px;top:12px;" width="17" height="16" viewBox="0 0 17 16"><ellipse cx="8.5" cy="8" rx="8" ry="4.8" fill="#3b66b0"/><ellipse cx="8.5" cy="8" rx="5.6" ry="3.1" fill="#dfe6f5"/><path d="M4 8H13" stroke="#c8202a" stroke-width="1.6"/><circle cx="8.5" cy="4.2" r="2" fill="#7a8fc0"/></svg>
<span class="t" style="left:1200px;top:14px;font-size:12px;color:#5a5d63;width:78px;height:14px;overflow:hidden;-webkit-mask-image:linear-gradient(90deg,#000 68px,transparent 78px);"><span style="display:inline-block;transform:scaleX(0.945);transform-origin:0 50%;">server31.hostla</span></span>
<svg class="b" style="left:1176px;top:12px;" width="16" height="16" viewBox="0 0 16 16"><circle cx="8" cy="8" r="7" fill="#464a52"/><path d="M3 5.5Q5.5 6.5 6.5 5Q7.5 3.2 9.5 3.4Q9.2 5.6 7.6 6.6Q6.4 7.6 7.4 8.6Q9.4 9 9.2 11.2Q8.6 13 7 12.6Q6.2 10.6 4.6 10.2Q2.6 9 3 5.5Z" fill="#fff"/><path d="M11 6Q12.6 6.4 13.4 8Q13.6 10 12.2 11.4Q11 10.4 11.4 9Q10.2 7.4 11 6Z" fill="#fff"/></svg>
<span class="t" style="left:1322px;top:14px;font-size:12px;color:#5a5d63;width:78px;height:14px;overflow:hidden;-webkit-mask-image:linear-gradient(90deg,#000 68px,transparent 78px);"><span style="display:inline-block;transform:scaleX(0.965);transform-origin:0 50%;">Hours Calculat</span></span>
<svg class="b" style="left:1298px;top:12px;" width="16" height="16" viewBox="0 0 16 16"><rect width="16" height="16" fill="#fff"/><path d="M12.6 5V2.4H3.4L8 8L3.4 13.6H12.6V11" stroke="#111" stroke-width="1.9" fill="none" stroke-linejoin="miter"/></svg>
<span class="t" style="left:1444px;top:14px;font-size:12px;color:#5a5d63;width:78px;height:14px;overflow:hidden;-webkit-mask-image:linear-gradient(90deg,#000 68px,transparent 78px);"><span style="display:inline-block;transform:scaleX(0.97);transform-origin:0 50%;">Photopea | On</span></span>
<svg class="b" style="left:1420px;top:12px;" width="16" height="16" viewBox="0 0 16 16"><rect width="16" height="16" rx="2.5" fill="#18a497"/><path d="M5 13V7Q5 4 8 4Q11 4 11 6.8Q11 9.6 8 9.6Q6.6 9.4 6.8 7.8Q7 6.6 8.2 6.6" stroke="#fff" stroke-width="1.5" fill="none" stroke-linecap="round"/></svg>
<span class="t" style="left:1566px;top:14px;font-size:12px;color:#5a5d63;width:78px;height:14px;overflow:hidden;-webkit-mask-image:linear-gradient(90deg,#000 68px,transparent 78px);"><span style="display:inline-block;transform:scaleX(0.965);transform-origin:0 50%;">(2) YouTube</span></span>
<svg class="b" style="left:1542px;top:12px;" width="17" height="16" viewBox="0 0 17 16"><rect x="0.3" y="2.4" width="16.4" height="11.4" rx="3.2" fill="#f00"/><path d="M6.8 5.4L11.2 8.1L6.8 10.8Z" fill="#fff"/></svg>
<svg class="b" style="left:289px;top:15px;" width="10" height="10" viewBox="0 0 10 10"><path d="M1 1L9 9M9 1L1 9" stroke="#3c4043" stroke-width="1.6" fill="none"/></svg>
<div class="b" style="left:432px;top:8px;width:1px;height:24px;background:#b9bcc4;"></div>
<div class="b" style="left:554px;top:8px;width:1px;height:24px;background:#b9bcc4;"></div>
<div class="b" style="left:676px;top:8px;width:1px;height:24px;background:#b9bcc4;"></div>
<div class="b" style="left:798px;top:8px;width:1px;height:24px;background:#b9bcc4;"></div>
<div class="b" style="left:920px;top:8px;width:1px;height:24px;background:#b9bcc4;"></div>
<div class="b" style="left:1042px;top:8px;width:1px;height:24px;background:#b9bcc4;"></div>
<div class="b" style="left:1164px;top:8px;width:1px;height:24px;background:#b9bcc4;"></div>
<div class="b" style="left:1286px;top:8px;width:1px;height:24px;background:#b9bcc4;"></div>
<div class="b" style="left:1408px;top:8px;width:1px;height:24px;background:#b9bcc4;"></div>
<div class="b" style="left:1530px;top:8px;width:1px;height:24px;background:#b9bcc4;"></div>
<div class="b" style="left:1652px;top:8px;width:1px;height:24px;background:#b9bcc4;"></div>
<svg class="b" style="left:1667px;top:14px;" width="12" height="12" viewBox="0 0 12 12"><path d="M6 0.5V11.5M0.5 6H11.5" stroke="#3c4043" stroke-width="1.3" fill="none"/></svg>
<svg class="b" style="left:1753px;top:10px;" width="12" height="8" viewBox="0 0 12 8"><path d="M1 1L6 6L11 1" stroke="#222" stroke-width="1.1" fill="none"/></svg>
<div class="b" style="left:1800px;top:14px;width:10px;height:1px;background:#222;"></div>
<svg class="b" style="left:1845px;top:8px;" width="12" height="12" viewBox="0 0 12 12"><rect x="0.5" y="2.5" width="8" height="8" rx="1.5" stroke="#222" fill="none"/><path d="M3 2.5V2Q3 0.5 4.5 0.5H9.5Q11.5 0.5 11.5 2.5V7.5Q11.5 9 10 9H9" stroke="#222" fill="none"/></svg>
<svg class="b" style="left:1891px;top:8px;" width="12" height="12" viewBox="0 0 12 12"><path d="M0.5 0.5L11.5 11.5M11.5 0.5L0.5 11.5" stroke="#222" stroke-width="1.1" fill="none"/></svg>
<svg class="b" style="left:17px;top:52px;" width="10" height="16" viewBox="0 0 10 16"><path d="M7.6 2L1.9 8L7.6 14" stroke="#454b59" stroke-width="1.3" fill="none"/></svg>
<svg class="b" style="left:49px;top:52px;" width="10" height="16" viewBox="0 0 10 16"><path d="M2.4 2L8.1 8L2.4 14" stroke="#b0b4c0" stroke-width="1.3" fill="none"/></svg>
<svg class="b" style="left:78px;top:52px;" width="16" height="16" viewBox="0 0 16 16"><path d="M13.2 5.2A6 6 0 1 0 14 8" stroke="#4a4f5c" stroke-width="1.4" fill="none"/><path d="M11 2.2L14.3 5.6L10 6.4Z" fill="#4a4f5c"/></svg>
<svg class="b" style="left:365px;top:53px;" width="11" height="14" viewBox="0 0 11 14"><path d="M1 1H10V13L5.5 9.5L1 13Z" stroke="#5a5f6b" stroke-width="1.3" fill="none" stroke-linejoin="round"/></svg>
<div class="b" style="left:393px;top:44px;width:1079px;height:32px;background:#fff;border-radius:8px;"></div>
<svg class="b" style="left:403px;top:53px;" width="14" height="14" viewBox="0 0 14 14"><circle cx="7" cy="7" r="6.6" fill="#4d5156"/><rect x="6.2" y="6" width="1.6" height="4.6" fill="#fff"/><rect x="6.2" y="3.4" width="1.6" height="1.7" fill="#fff"/></svg>
<span class="t" style="left:427.50px;top:53px;font-size:14px;color:#4d5156;transform:scaleX(0.9087);transform-origin:0 50%;">File</span>
<div class="b" style="left:455px;top:52px;width:1px;height:16px;background:#9aa0a6;"></div>
<span class="t" style="left:465.00px;top:53px;font-size:14px;color:#202124;transform:scaleX(1.0146);transform-origin:0 50%;">D:/Work/school/new_design/index.html</span>
<div class="b" style="left:1401px;top:52px;width:1px;height:16px;background:#8a8f98;"></div>
<svg class="b" style="left:1411.8px;top:50.4px;" width="17.4" height="19.4" viewBox="0 0 16 18"><path d="M8 0.8L11.2 1.6L12.6 1.2L14.8 3.6L14.2 5L15 7.4L12.6 13.2L8 17L3.4 13.2L1 7.4L1.8 5L1.2 3.6L3.4 1.2L4.8 1.6Z" fill="#3d4149"/><path d="M8 4.2L11 4.8L12.2 6.6L10.4 8.6L11 10.2L8 12.6L5 10.2L5.6 8.6L3.8 6.6L5 4.8Z" fill="#fff"/><path d="M8 6.2L9.6 7.6L8 10.6L6.4 7.6Z" fill="#3d4149"/></svg>
<svg class="b" style="left:1446px;top:51px;" width="18" height="17" viewBox="0 0 18 17"><path d="M9 1L17 15.5H1Z" fill="#ff4724"/><path d="M9 1L17 15.5L9 10.5Z" fill="#9e1f63"/><path d="M1 15.5L9 10.5L17 15.5Z" fill="#662d91"/><path d="M9 6.4L12.4 12.8H5.6Z" fill="#fff"/></svg>
<svg class="b" style="left:1640.5px;top:53.5px;" width="15" height="13.4" viewBox="0 0 15 13.4"><path d="M1.6 2.6H4L5.2 0.4H9.8L11 2.6H13.4Q14.6 2.6 14.6 3.8V11.8Q14.6 13 13.4 13H1.6Q0.4 13 0.4 11.8V3.8Q0.4 2.6 1.6 2.6Z" fill="#8f8f8f"/><circle cx="7.5" cy="7.6" r="3.1" fill="#f5f6f9"/><circle cx="7.5" cy="7.6" r="1.7" fill="#8f8f8f"/></svg>
<svg class="b" style="left:1672px;top:52px;" width="16" height="16" viewBox="0 0 16 16"><defs><linearGradient id="tg" x1="0" y1="0" x2="0" y2="1"><stop offset="0" stop-color="#a6a6a6"/><stop offset="1" stop-color="#858585"/></linearGradient></defs><rect width="16" height="16" rx="1.2" fill="url(#tg)"/><circle cx="8" cy="5.6" r="4.2" fill="#c2c2c2"/><path d="M6.6 16V6.2Q6.6 4.6 8 4.6Q9.4 4.6 9.4 6.2V9.2L12 10Q13 10.4 12.8 11.6L12 16Z" fill="#f4f6fa"/><path d="M6.6 16V10.4L5 11.4V14Z" fill="#f4f6fa"/></svg>
<svg class="b" style="left:1703px;top:51px;" width="19" height="18" viewBox="0 0 19 18"><path d="M5.76 3.44A6.6 6.6 0 1 0 14.56 12.24Z" fill="#ff6a0a"/><path d="M10.8 3.5L11.5 0.8M13 4.8L15.1 2.7M14.3 7L17.1 6.3" stroke="#ff6a0a" stroke-width="1.5" stroke-linecap="round"/></svg>
<svg class="b" style="left:1736.5px;top:52.4px;" width="15" height="15" viewBox="0 0 15 15"><path d="M5.2 2.7Q5.2 0.8 7 0.8Q8.8 0.8 8.8 2.7V3.4H11.8V6.4H12.5Q14.3 6.4 14.3 8.2Q14.3 10 12.5 10H11.8V13.6H8.6V12.9Q8.6 11.4 7 11.4Q5.4 11.4 5.4 12.9V13.6H2.2V10.2H1.9Q0.6 10 0.6 8.2Q0.6 6.4 1.9 6.2H2.2V3.4H5.2Z" stroke="#6e7a90" stroke-width="1.15" fill="none" stroke-linejoin="round"/></svg>
<svg class="b" style="left:1768.5px;top:53.7px;" width="15" height="12.6" viewBox="0 0 15 12.6"><rect x="0.7" y="0.7" width="13.4" height="11" rx="1.4" stroke="#5c6479" stroke-width="1.3" fill="none"/><path d="M7.8 0.8H12.8Q14 0.8 14 2V10.4Q14 11.6 12.8 11.6H7.8Z" fill="#5c6479"/></svg>
<svg class="b" style="left:1800.7px;top:53.7px;" width="15" height="12.6" viewBox="0 0 15 12.6"><path d="M1 2.4Q1 0.8 2.6 0.8H11" stroke="#7c8499" stroke-width="1.2" fill="none"/><rect x="0.7" y="1.9" width="13.4" height="9.9" rx="1.6" stroke="#7c8499" stroke-width="1.2" fill="none"/><rect x="8" y="5" width="6.4" height="3.8" rx="1" fill="none" stroke="#7c8499" stroke-width="1.1"/><rect x="9.4" y="6" width="3" height="1.8" fill="#7c8499"/></svg>
<div class="b" style="left:1826px;top:46px;width:54px;height:28px;border:1px solid #c8ccd6;border-radius:9px;box-sizing:border-box;background:#f8f9fb;"></div>
<svg class="b" style="left:1833px;top:54.2px;" width="12" height="12" viewBox="0 0 12 12"><circle cx="5.8" cy="5.8" r="5.1" fill="#6d7190"/><rect x="2.9" y="5" width="5.8" height="1.7" rx="0.4" fill="#f8f9fb"/></svg>
<span class="t" style="left:1848.40px;top:54px;font-size:12.5px;color:#34373d;letter-spacing:-0.083px;transform:scaleX(0.8800);transform-origin:0 50%;">VPN</span>
<svg class="b" style="left:1891px;top:54px;" width="14" height="12" viewBox="0 0 14 12"><path d="M0 1.3H13.8M0 6H13.8M0 10.7H13.8" stroke="#5c6479" stroke-width="1.3"/></svg>
<div class="b" style="left:0px;top:1032px;width:1920px;height:48px;background:#1e1e1e;"></div>
<svg class="b" style="left:763.75px;top:1045px;" width="24" height="23" viewBox="0 0 24 23"><defs><linearGradient id="wg" x1="0" y1="0" x2="1" y2="1"><stop offset="0" stop-color="#69d6f7"/><stop offset="1" stop-color="#1589de"/></linearGradient></defs><path d="M0 0H11.4V11H0ZM12.4 0H23.8V11H12.4ZM0 12H11.4V23H0ZM12.4 12H23.8V23H12.4Z" fill="url(#wg)"/></svg>
<div class="b" style="left:801.25px;top:1040px;width:99.5px;height:32px;background:#2f2d31;border-radius:16px;border:1px solid #38363a;box-sizing:border-box;"></div>
<svg class="b" style="left:823.5px;top:1049px;" width="15" height="15" viewBox="0 0 15 15"><circle cx="6" cy="6" r="4.9" stroke="#fff" stroke-width="1.5" fill="none"/><path d="M9.6 9.6L14 14" stroke="#fff" stroke-width="1.7" stroke-linecap="round"/></svg>
<span class="t" style="left:843.00px;top:1050px;font-size:13px;color:#fff;letter-spacing:-0.094px;transform:scaleX(0.8800);transform-origin:0 50%;-webkit-text-stroke:0.3px #fff;">Search</span>
<svg class="b" style="left:912.8px;top:1042.3px;" width="28" height="27" viewBox="0 0 25 24"><path d="M12.4 2.6A9.2 9.2 0 0 0 4.4 16.4L2.6 22L8.4 20.4A9.2 9.2 0 1 0 12.4 2.6Z" stroke="#25d366" stroke-width="2.5" fill="none" stroke-linejoin="round"/><path d="M8.8 7.4Q7.6 8.2 7.8 10Q8.6 13 11.2 15Q13.8 16.8 15.6 16.4Q17 16 17 14.4L14.6 13.2L13.6 14.2Q11.6 13.4 10.4 11.2L11.2 10.2L10.2 7.4Z" fill="#25d366"/></svg>
<div class="b" style="left:925.8px;top:1037.4px;width:19.2px;height:19.2px;background:#d1a0e8;border-radius:50%;"></div>
<span class="t" style="left:929.48px;top:1042px;font-size:11px;color:#241c2a;-webkit-text-stroke:0.25px #241c2a;">16</span>
<svg class="b" style="left:957px;top:1044px;" width="26" height="23" viewBox="0 0 26 23"><circle cx="9" cy="15" r="7.2" fill="#e6c619"/><path d="M1.5 17Q0 5 10 2.5Q18 1 24 6Q25.5 9 22 11.5Q18 12 15.5 9.5Q12 7.5 8 9Q4 12 4.5 18Z" fill="#7f9a3c"/><circle cx="9.4" cy="15.2" r="4.4" fill="#e6c619"/><circle cx="9.6" cy="15.4" r="3.5" fill="none" stroke="#e8801a" stroke-width="1.8"/><circle cx="9.8" cy="15.6" r="2.1" fill="#d4251c"/><circle cx="9.8" cy="15.6" r="0.9" fill="#1a0a08"/><circle cx="21.6" cy="7.4" r="1.5" fill="#e4e6cc"/><circle cx="21.8" cy="7.4" r="0.65" fill="#222"/></svg>
<svg class="b" style="left:1001px;top:1045px;" width="26" height="22" viewBox="0 0 26 22"><path d="M1 3Q1 1 3 1H9L12 4H23Q25 4 25 6V9H1Z" fill="#e9a52a"/><rect x="1" y="6" width="24" height="15" rx="1.6" fill="#f9cf4d"/><path d="M1 19H25V19.4Q25 21 23.4 21H2.6Q1 21 1 19.4Z" fill="#e2b23a"/><rect x="7" y="14" width="12" height="7" rx="1.4" fill="#2f7fd0"/><rect x="7" y="14" width="12" height="3.6" rx="1.4" fill="#1f63b4"/></svg>
<div class="b" style="left:1010.75px;top:1072px;width:6.25px;height:2.5px;background:#8d8d8f;border-radius:1.25px;"></div>
<div class="b" style="left:1038px;top:1036.25px;width:40px;height:39.25px;background:#2d2c30;border-radius:5px;border:1px solid #3a393d;box-sizing:border-box;"></div>
<svg class="b" style="left:1047px;top:1043.3px;" width="22" height="26" viewBox="0 0 22 26"><defs><linearGradient id="bg1" x1="0" y1="0" x2="0" y2="1"><stop offset="0" stop-color="#ff5a1f"/><stop offset="1" stop-color="#f0301c"/></linearGradient></defs><path d="M11 0.6L15.4 1.2L17.2 0.4L20.6 4L19.8 6.2L20.8 9.4L17.6 19.4Q16.8 21.4 15 22.6L11 25.4L7 22.6Q5.2 21.4 4.4 19.4L1.2 9.4L2.2 6.2L1.4 4L4.8 0.4L6.6 1.2Z" fill="url(#bg1)"/><path d="M11 4.6L14.6 5L16.4 4.6L18 7.4L16.8 9.6L17.4 11.6L14.6 14L15.2 16.4L11 19.6L6.8 16.4L7.4 14L4.6 11.6L5.2 9.6L4 7.4L5.6 4.6L7.4 5Z" fill="#fff"/><path d="M11 8L13 7.6L15 8.8L13 10.4L13.4 12.4L11 11.8L8.6 12.4L9 10.4L7 8.8L9 7.6Z" fill="#f4401e"/><path d="M11 13.6L13 15L11 16.8L9 15Z" fill="#f4401e"/></svg>
<div class="b" style="left:1050px;top:1072px;width:16.25px;height:2.5px;background:#d9a6ea;border-radius:1.25px;"></div>
<svg class="b" style="left:1090px;top:1043.75px;" width="24" height="24.5" viewBox="0 0 24 24.5"><rect width="24" height="24.5" rx="2.5" fill="#4b4b4b"/><path d="M6.4 7.4L17.6 3.8V8.6L9.4 11.2L17.6 14V18.2L6.4 21.4V16.8L14.4 14.2L6.4 11.6Z" fill="#ff9800"/></svg>
<div class="b" style="left:1098.75px;top:1072px;width:6.25px;height:2.5px;background:#8d8d8f;border-radius:1.25px;"></div>
<svg class="b" style="left:1135.5px;top:1043.3px;" width="22" height="26" viewBox="0 0 22 26"><defs><linearGradient id="bg2" x1="0" y1="0" x2="0" y2="1"><stop offset="0" stop-color="#ff5a1f"/><stop offset="1" stop-color="#f0301c"/></linearGradient></defs><path d="M11 0.6L15.4 1.2L17.2 0.4L20.6 4L19.8 6.2L20.8 9.4L17.6 19.4Q16.8 21.4 15 22.6L11 25.4L7 22.6Q5.2 21.4 4.4 19.4L1.2 9.4L2.2 6.2L1.4 4L4.8 0.4L6.6 1.2Z" fill="url(#bg2)"/><path d="M11 4.6L14.6 5L16.4 4.6L18 7.4L16.8 9.6L17.4 11.6L14.6 14L15.2 16.4L11 19.6L6.8 16.4L7.4 14L4.6 11.6L5.2 9.6L4 7.4L5.6 4.6L7.4 5Z" fill="#fff"/><path d="M11 8L13 7.6L15 8.8L13 10.4L13.4 12.4L11 11.8L8.6 12.4L9 10.4L7 8.8L9 7.6Z" fill="#f4401e"/><path d="M11 13.6L13 15L11 16.8L9 15Z" fill="#f4401e"/></svg>
<div class="b" style="left:1142.5px;top:1072px;width:6.25px;height:2.5px;background:#8d8d8f;border-radius:1.25px;"></div>
<svg class="b" style="left:1708px;top:1052px;" width="12" height="8" viewBox="0 0 12 8"><path d="M1 6.8L6 1.6L11 6.8" stroke="#fff" stroke-width="1.5" fill="none"/></svg>
<span class="t" style="left:1740.35px;top:1044px;font-size:11px;color:#fff;transform:scaleX(0.9775);transform-origin:0 50%;-webkit-text-stroke:0.4px #fff;">ENG</span>
<span class="t" style="left:1744.35px;top:1060px;font-size:11px;color:#fff;-webkit-text-stroke:0.4px #fff;">US</span>
<svg class="b" style="left:1781px;top:1047px;" width="18" height="18" viewBox="0 0 18 18"><rect x="1.5" y="2.4" width="12.2" height="10.8" rx="0.6" stroke="#fff" stroke-width="1.1" fill="none"/><path d="M6.6 13.2V16M4 16.4H11.2" stroke="#fff" stroke-width="1.1"/><rect x="12.4" y="1.2" width="4.2" height="5.4" rx="0.9" fill="#1e1e1e" stroke="#fff" stroke-width="1.05"/><rect x="13.7" y="2.5" width="1.6" height="1.4" fill="#fff"/><path d="M14.5 6.6V16.8" stroke="#fff" stroke-width="1.05"/></svg>
<svg class="b" style="left:1805.5px;top:1048.5px;" width="18" height="15" viewBox="0 0 18 15"><path d="M1 5.2H4L8 1.6V13.4L4 9.8H1Z" stroke="#fff" stroke-width="1.1" fill="none" stroke-linejoin="round"/><path d="M10.4 5.2Q11.6 7.5 10.4 9.8M12.6 3.4Q14.8 7.5 12.6 11.6M14.8 1.6Q18 7.5 14.8 13.4" stroke="#fff" stroke-width="1.05" fill="none" stroke-linecap="round"/></svg>
<span class="t" style="left:1851.00px;top:1043px;font-size:11px;color:#fff;transform:scaleX(1.0556);transform-origin:0 50%;-webkit-text-stroke:0.4px #fff;">03:41 PM</span>
<span class="t" style="left:1838.90px;top:1059px;font-size:11px;color:#fff;transform:scaleX(1.0983);transform-origin:0 50%;-webkit-text-stroke:0.4px #fff;">13-02-2024</span>
</body></html>
